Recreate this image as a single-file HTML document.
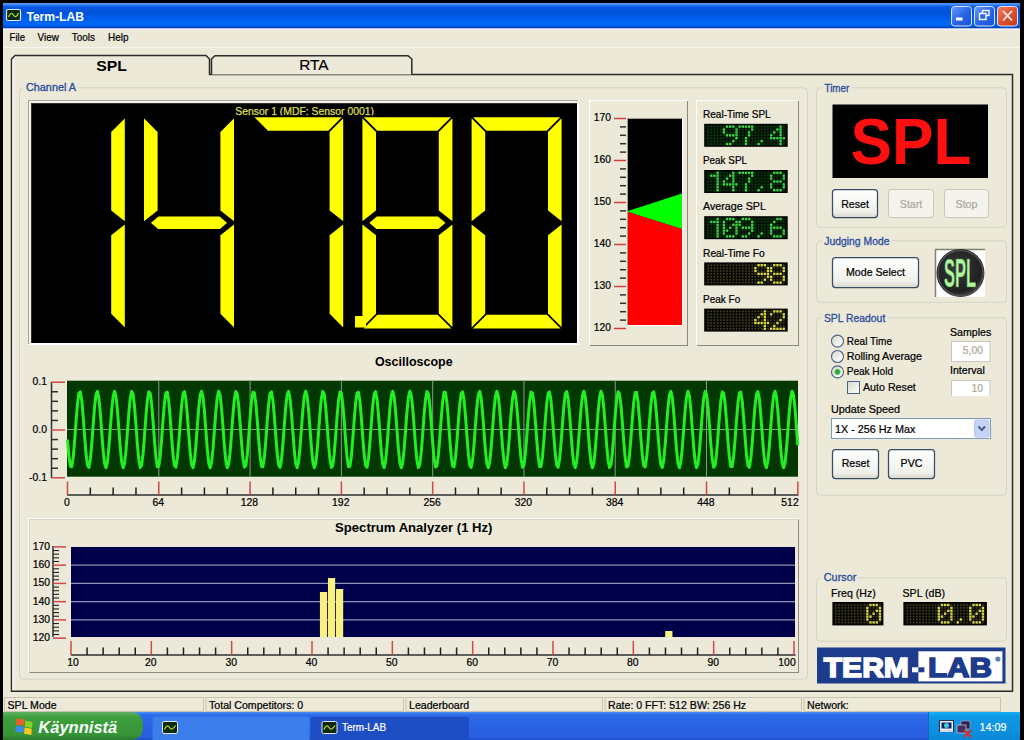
<!DOCTYPE html>
<html><head><meta charset="utf-8"><style>
html,body{margin:0;padding:0;background:#000;width:1024px;height:740px;overflow:hidden}
svg{display:block;font-family:"Liberation Sans", sans-serif}
</style></head><body>
<svg width="1024" height="740" viewBox="0 0 1024 740">
<rect x="0" y="0" width="1024" height="740" fill="#000" />
<rect x="3" y="28" width="1017" height="684" fill="#ECE9D8" />
<defs>
<linearGradient id="tb" x1="0" y1="0" x2="0" y2="1">
<stop offset="0" stop-color="#5A9CF6"/><stop offset="0.07" stop-color="#3A84F2"/><stop offset="0.14" stop-color="#0A5CE6"/><stop offset="0.35" stop-color="#0052DA"/><stop offset="0.6" stop-color="#005EEC"/><stop offset="0.86" stop-color="#006AF8"/><stop offset="0.93" stop-color="#0050D0"/><stop offset="1" stop-color="#0038A8"/></linearGradient>
<linearGradient id="task" x1="0" y1="0" x2="0" y2="1">
<stop offset="0" stop-color="#4A90F8"/><stop offset="0.1" stop-color="#2E6CE8"/><stop offset="0.5" stop-color="#2A62E4"/><stop offset="0.9" stop-color="#2860E0"/><stop offset="1" stop-color="#1C50C8"/></linearGradient>
<linearGradient id="start" x1="0" y1="0" x2="0" y2="1">
<stop offset="0" stop-color="#60B060"/><stop offset="0.2" stop-color="#3C9E3C"/><stop offset="0.8" stop-color="#379437"/><stop offset="1" stop-color="#2C7A2C"/></linearGradient>
<linearGradient id="tray" x1="0" y1="0" x2="0" y2="1">
<stop offset="0" stop-color="#18B0F8"/><stop offset="0.15" stop-color="#0E9AE8"/><stop offset="1" stop-color="#0A88D8"/></linearGradient>
<linearGradient id="btn" x1="0" y1="0" x2="0" y2="1">
<stop offset="0" stop-color="#FFFFFF"/><stop offset="0.8" stop-color="#F0F0EA"/><stop offset="1" stop-color="#D8D5C8"/></linearGradient>
<linearGradient id="wbtn" x1="0" y1="0" x2="1" y2="1">
<stop offset="0" stop-color="#6A9CF8"/><stop offset="0.5" stop-color="#2A66E8"/><stop offset="1" stop-color="#1A50D0"/></linearGradient>
<linearGradient id="xbtn" x1="0" y1="0" x2="1" y2="1">
<stop offset="0" stop-color="#F08060"/><stop offset="0.5" stop-color="#E05030"/><stop offset="1" stop-color="#C03818"/></linearGradient>
<radialGradient id="logo" cx="0.45" cy="0.4" r="0.6">
<stop offset="0" stop-color="#3A3A3A"/><stop offset="0.8" stop-color="#202020"/><stop offset="1" stop-color="#404040"/></radialGradient>
<linearGradient id="radio" x1="0" y1="0" x2="1" y2="1">
<stop offset="0" stop-color="#D8D8D0"/><stop offset="1" stop-color="#FFFFFF"/></linearGradient>
</defs>
<rect x="3" y="3" width="1017" height="25.5" fill="url(#tb)" />
<rect x="3" y="28.5" width="1017" height="1.5" fill="#F2F2FC" />
<rect x="6.5" y="9.5" width="14" height="11" fill="#102810" stroke="#E0E8F0" stroke-width="1.2" rx="1.5"/>
<path d="M8.5 17 Q11 11 13.5 15 Q16 19 18.5 13" fill="none" stroke="#B0E040" stroke-width="1.3"/>
<text x="26.4" y="21" font-size="13" fill="#FFFFFF" font-weight="bold" text-anchor="start" textLength="57.6" lengthAdjust="spacingAndGlyphs" >Term-LAB</text>
<rect x="951.5" y="6.5" width="20" height="19.5" rx="3" fill="url(#wbtn)" stroke="#D8E4FA" stroke-width="1"/>
<rect x="956" y="17.5" width="6.5" height="3" fill="#FFFFFF" />
<rect x="974.5" y="6.5" width="20" height="19.5" rx="3" fill="url(#wbtn)" stroke="#D8E4FA" stroke-width="1"/>
<rect x="982.5" y="10.5" width="6.5" height="5" fill="none" stroke="#fff" stroke-width="1.4"/>
<rect x="979.5" y="13.5" width="6.5" height="6" fill="#2A66E8" stroke="#fff" stroke-width="1.4"/>
<rect x="997.5" y="6.5" width="20" height="19.5" rx="3" fill="url(#xbtn)" stroke="#D8E4FA" stroke-width="1"/>
<path d="M1003 11 L1012 20.5 M1012 11 L1003 20.5" stroke="#FFF4F0" stroke-width="1.8"/>
<text x="9.6" y="41.4" font-size="10.8" fill="#000" font-weight="normal" text-anchor="start" textLength="15.4" lengthAdjust="spacingAndGlyphs" stroke="#000" stroke-width="0.22">File</text>
<text x="37.6" y="41.4" font-size="10.8" fill="#000" font-weight="normal" text-anchor="start" textLength="21.2" lengthAdjust="spacingAndGlyphs" stroke="#000" stroke-width="0.22">View</text>
<text x="71.8" y="41.4" font-size="10.8" fill="#000" font-weight="normal" text-anchor="start" textLength="23.2" lengthAdjust="spacingAndGlyphs" stroke="#000" stroke-width="0.22">Tools</text>
<text x="108" y="41.4" font-size="10.8" fill="#000" font-weight="normal" text-anchor="start" textLength="20.5" lengthAdjust="spacingAndGlyphs" stroke="#000" stroke-width="0.22">Help</text>
<line x1="3" y1="47.5" x2="1020" y2="47.5" stroke="#F6F4EC" stroke-width="1" />
<path d="M11.5 691.3 L11.5 59 L15 55.5 L206 55.5 L209.5 59 L209.5 74.5 L1012.5 74.5 L1012.5 691.3 Z" fill="#ECE9D8" stroke="#2A2A2A" stroke-width="1.5"/>
<path d="M13 690 L13 60 L16 57" fill="none" stroke="#FFFFFF" stroke-width="1"/>
<path d="M211.5 74.5 L211.5 59 L215 55.8 L408 55.8 L411.8 59 L411.8 74.5" fill="#ECE9D8" stroke="#2A2A2A" stroke-width="1.5"/>
<text x="96.3" y="70.8" font-size="15.5" fill="#000" font-weight="bold" text-anchor="start" textLength="30.7" lengthAdjust="spacingAndGlyphs" >SPL</text>
<text x="299.3" y="70.4" font-size="15.2" fill="#000" font-weight="normal" text-anchor="start" textLength="29.3" lengthAdjust="spacingAndGlyphs" stroke="#000" stroke-width="0.22">RTA</text>
<rect x="19.5" y="87.8" width="788" height="591.5" rx="4" fill="none" stroke="#D6D4C4" stroke-width="1"/>
<rect x="24" y="84" width="54" height="9" fill="#ECE9D8" />
<text x="26" y="91" font-size="10.4" fill="#2C4C9C" font-weight="normal" text-anchor="start" textLength="50" lengthAdjust="spacingAndGlyphs" stroke="#2C4C9C" stroke-width="0.3">Channel A</text>
<rect x="816.5" y="87.8" width="190" height="139.5" rx="4" fill="none" stroke="#D6D4C4" stroke-width="1"/>
<rect x="822.5" y="84" width="28.8" height="9" fill="#ECE9D8" />
<text x="824.5" y="91.5" font-size="10.4" fill="#2C4C9C" font-weight="normal" text-anchor="start" textLength="24.8" lengthAdjust="spacingAndGlyphs" stroke="#2C4C9C" stroke-width="0.3">Timer</text>
<rect x="816.5" y="240.8" width="190" height="61.5" rx="4" fill="none" stroke="#D6D4C4" stroke-width="1"/>
<rect x="822.2" y="237" width="69.3" height="9" fill="#ECE9D8" />
<text x="824.2" y="245.3" font-size="10.4" fill="#2C4C9C" font-weight="normal" text-anchor="start" textLength="65.3" lengthAdjust="spacingAndGlyphs" stroke="#2C4C9C" stroke-width="0.3">Judging Mode</text>
<rect x="816.5" y="317.8" width="190" height="177.5" rx="4" fill="none" stroke="#D6D4C4" stroke-width="1"/>
<rect x="821.9" y="314" width="65.4" height="9" fill="#ECE9D8" />
<text x="823.9" y="321.6" font-size="10.4" fill="#2C4C9C" font-weight="normal" text-anchor="start" textLength="61.4" lengthAdjust="spacingAndGlyphs" stroke="#2C4C9C" stroke-width="0.3">SPL Readout</text>
<rect x="816.5" y="577.8" width="190" height="63.5" rx="4" fill="none" stroke="#D6D4C4" stroke-width="1"/>
<rect x="821.8" y="574" width="36.5" height="9" fill="#ECE9D8" />
<text x="823.8" y="581.4" font-size="10.4" fill="#2C4C9C" font-weight="normal" text-anchor="start" textLength="32.5" lengthAdjust="spacingAndGlyphs" stroke="#2C4C9C" stroke-width="0.3">Cursor</text>
<rect x="28" y="100" width="551" height="245" fill="#FFFFFF" />
<rect x="28" y="100" width="550" height="244" fill="#A8A698" />
<rect x="29" y="101" width="549" height="243" fill="#F6F4EA" />
<rect x="31" y="103" width="547" height="241" fill="#FFFFFF" />
<rect x="31" y="103" width="546" height="240" fill="#303030" />
<rect x="32" y="104" width="545" height="239" fill="#000000" />
<text x="235.3" y="115.3" font-size="10.4" fill="#DCDC5A" font-weight="normal" text-anchor="start" textLength="138.7" lengthAdjust="spacingAndGlyphs" stroke="#DCDC5A" stroke-width="0.25">Sensor 1 (MDF: Sensor 0001)</text>
<polygon points="125.6,116.4 110.4,131.6 110.4,210.8 125.6,222.8" fill="#FFFF00" stroke="#000" stroke-width="1.6" stroke-linejoin="miter"/>
<polygon points="125.6,329.2 110.4,314.0 110.4,234.8 125.6,222.8" fill="#FFFF00" stroke="#000" stroke-width="1.6" stroke-linejoin="miter"/>
<polygon points="143.2,116.4 158.4,131.6 158.4,210.8 143.2,222.8" fill="#FFFF00" stroke="#000" stroke-width="1.6" stroke-linejoin="miter"/>
<polygon points="149.7,222.8 157.9,215.8 220.1,215.8 228.3,222.8 220.1,229.8 157.9,229.8" fill="#FFFF00" stroke="#000" stroke-width="1.6" stroke-linejoin="miter"/>
<polygon points="234.8,116.4 219.6,131.6 219.6,210.8 234.8,222.8" fill="#FFFF00" stroke="#000" stroke-width="1.6" stroke-linejoin="miter"/>
<polygon points="234.8,329.2 219.6,314.0 219.6,234.8 234.8,222.8" fill="#FFFF00" stroke="#000" stroke-width="1.6" stroke-linejoin="miter"/>
<polygon points="252.4,116.4 344.0,116.4 328.8,131.6 267.6,131.6" fill="#FFFF00" stroke="#000" stroke-width="1.6" stroke-linejoin="miter"/>
<polygon points="344.0,116.4 328.8,131.6 328.8,210.8 344.0,222.8" fill="#FFFF00" stroke="#000" stroke-width="1.6" stroke-linejoin="miter"/>
<polygon points="344.0,329.2 328.8,314.0 328.8,234.8 344.0,222.8" fill="#FFFF00" stroke="#000" stroke-width="1.6" stroke-linejoin="miter"/>
<polygon points="361.6,116.4 453.2,116.4 438.0,131.6 376.8,131.6" fill="#FFFF00" stroke="#000" stroke-width="1.6" stroke-linejoin="miter"/>
<polygon points="453.2,116.4 438.0,131.6 438.0,210.8 453.2,222.8" fill="#FFFF00" stroke="#000" stroke-width="1.6" stroke-linejoin="miter"/>
<polygon points="453.2,329.2 438.0,314.0 438.0,234.8 453.2,222.8" fill="#FFFF00" stroke="#000" stroke-width="1.6" stroke-linejoin="miter"/>
<polygon points="361.6,329.2 453.2,329.2 438.0,314.0 376.8,314.0" fill="#FFFF00" stroke="#000" stroke-width="1.6" stroke-linejoin="miter"/>
<polygon points="361.6,329.2 376.8,314.0 376.8,234.8 361.6,222.8" fill="#FFFF00" stroke="#000" stroke-width="1.6" stroke-linejoin="miter"/>
<polygon points="361.6,116.4 376.8,131.6 376.8,210.8 361.6,222.8" fill="#FFFF00" stroke="#000" stroke-width="1.6" stroke-linejoin="miter"/>
<polygon points="368.1,222.8 376.3,215.8 438.5,215.8 446.7,222.8 438.5,229.8 376.3,229.8" fill="#FFFF00" stroke="#000" stroke-width="1.6" stroke-linejoin="miter"/>
<polygon points="470.8,116.4 562.4,116.4 547.2,131.6 486.0,131.6" fill="#FFFF00" stroke="#000" stroke-width="1.6" stroke-linejoin="miter"/>
<polygon points="562.4,116.4 547.2,131.6 547.2,210.8 562.4,222.8" fill="#FFFF00" stroke="#000" stroke-width="1.6" stroke-linejoin="miter"/>
<polygon points="562.4,329.2 547.2,314.0 547.2,234.8 562.4,222.8" fill="#FFFF00" stroke="#000" stroke-width="1.6" stroke-linejoin="miter"/>
<polygon points="470.8,329.2 562.4,329.2 547.2,314.0 486.0,314.0" fill="#FFFF00" stroke="#000" stroke-width="1.6" stroke-linejoin="miter"/>
<polygon points="470.8,329.2 486.0,314.0 486.0,234.8 470.8,222.8" fill="#FFFF00" stroke="#000" stroke-width="1.6" stroke-linejoin="miter"/>
<polygon points="470.8,116.4 486.0,131.6 486.0,210.8 470.8,222.8" fill="#FFFF00" stroke="#000" stroke-width="1.6" stroke-linejoin="miter"/>
<rect x="355" y="316" width="11" height="11.5" fill="#FFFF00" />
<rect x="589" y="100" width="99" height="246" fill="#FFFFFF" />
<rect x="590" y="101" width="98" height="245" fill="#8C8A7C" />
<rect x="590" y="101" width="97" height="244" fill="#ECE9D8" />
<rect x="627" y="118" width="56" height="208" fill="#FFFFFF" />
<rect x="627" y="118" width="55" height="207" fill="#A0A090" />
<rect x="628" y="119" width="54" height="206" fill="#000" />
<polygon points="628,211 682,193.5 682,229 628,212" fill="#00FF00"/>
<polygon points="628,212 682,229 682,325 628,325" fill="#FF0000"/>
<line x1="614" y1="118.5" x2="626" y2="118.5" stroke="#D04040" stroke-width="1.5" />
<text x="611" y="120.5" font-size="10.3" fill="#000" font-weight="normal" text-anchor="end" stroke="#000" stroke-width="0.22">170</text>
<line x1="620" y1="126.9" x2="626" y2="126.9" stroke="#303030" stroke-width="1.5" />
<line x1="620" y1="135.3" x2="626" y2="135.3" stroke="#303030" stroke-width="1.5" />
<line x1="620" y1="143.7" x2="626" y2="143.7" stroke="#303030" stroke-width="1.5" />
<line x1="620" y1="152.1" x2="626" y2="152.1" stroke="#303030" stroke-width="1.5" />
<line x1="614" y1="160.5" x2="626" y2="160.5" stroke="#D04040" stroke-width="1.5" />
<text x="611" y="162.5" font-size="10.3" fill="#000" font-weight="normal" text-anchor="end" stroke="#000" stroke-width="0.22">160</text>
<line x1="620" y1="168.9" x2="626" y2="168.9" stroke="#303030" stroke-width="1.5" />
<line x1="620" y1="177.3" x2="626" y2="177.3" stroke="#303030" stroke-width="1.5" />
<line x1="620" y1="185.7" x2="626" y2="185.7" stroke="#303030" stroke-width="1.5" />
<line x1="620" y1="194.10000000000002" x2="626" y2="194.10000000000002" stroke="#303030" stroke-width="1.5" />
<line x1="614" y1="202.5" x2="626" y2="202.5" stroke="#D04040" stroke-width="1.5" />
<text x="611" y="204.5" font-size="10.3" fill="#000" font-weight="normal" text-anchor="end" stroke="#000" stroke-width="0.22">150</text>
<line x1="620" y1="210.9" x2="626" y2="210.9" stroke="#303030" stroke-width="1.5" />
<line x1="620" y1="219.3" x2="626" y2="219.3" stroke="#303030" stroke-width="1.5" />
<line x1="620" y1="227.7" x2="626" y2="227.7" stroke="#303030" stroke-width="1.5" />
<line x1="620" y1="236.10000000000002" x2="626" y2="236.10000000000002" stroke="#303030" stroke-width="1.5" />
<line x1="614" y1="244.5" x2="626" y2="244.5" stroke="#D04040" stroke-width="1.5" />
<text x="611" y="246.5" font-size="10.3" fill="#000" font-weight="normal" text-anchor="end" stroke="#000" stroke-width="0.22">140</text>
<line x1="620" y1="252.9" x2="626" y2="252.9" stroke="#303030" stroke-width="1.5" />
<line x1="620" y1="261.3" x2="626" y2="261.3" stroke="#303030" stroke-width="1.5" />
<line x1="620" y1="269.70000000000005" x2="626" y2="269.70000000000005" stroke="#303030" stroke-width="1.5" />
<line x1="620" y1="278.1" x2="626" y2="278.1" stroke="#303030" stroke-width="1.5" />
<line x1="614" y1="286.5" x2="626" y2="286.5" stroke="#D04040" stroke-width="1.5" />
<text x="611" y="288.5" font-size="10.3" fill="#000" font-weight="normal" text-anchor="end" stroke="#000" stroke-width="0.22">130</text>
<line x1="620" y1="294.9" x2="626" y2="294.9" stroke="#303030" stroke-width="1.5" />
<line x1="620" y1="303.3" x2="626" y2="303.3" stroke="#303030" stroke-width="1.5" />
<line x1="620" y1="311.70000000000005" x2="626" y2="311.70000000000005" stroke="#303030" stroke-width="1.5" />
<line x1="620" y1="320.1" x2="626" y2="320.1" stroke="#303030" stroke-width="1.5" />
<line x1="614" y1="328.5" x2="626" y2="328.5" stroke="#D04040" stroke-width="1.5" />
<text x="611" y="330.5" font-size="10.3" fill="#000" font-weight="normal" text-anchor="end" stroke="#000" stroke-width="0.22">120</text>
<rect x="696" y="100" width="103" height="246" fill="#FFFFFF" />
<rect x="697" y="101" width="102" height="245" fill="#8C8A7C" />
<rect x="697" y="101" width="101" height="244" fill="#ECE9D8" />
<text x="703" y="117.89999999999999" font-size="10.2" fill="#000" font-weight="normal" text-anchor="start" textLength="67.7" lengthAdjust="spacingAndGlyphs" stroke="#000" stroke-width="0.22">Real-Time SPL</text>
<rect x="704.2" y="123.8" width="83.5" height="23" fill="#000" />
<rect x="705.2" y="124.8" width="81.5" height="21" fill="#001000" />
<rect x="707.35" y="125.80" width="1.60" height="1.60" fill="#0E4214"/>
<rect x="710.50" y="125.80" width="1.60" height="1.60" fill="#0E4214"/>
<rect x="713.65" y="125.80" width="1.60" height="1.60" fill="#0E4214"/>
<rect x="716.80" y="125.80" width="1.60" height="1.60" fill="#0E4214"/>
<rect x="719.95" y="125.80" width="1.60" height="1.60" fill="#0E4214"/>
<rect x="723.10" y="125.80" width="1.60" height="1.60" fill="#0E4214"/>
<rect x="725.85" y="125.40" width="2.40" height="2.40" fill="#3CD848"/>
<rect x="729.00" y="125.40" width="2.40" height="2.40" fill="#3CD848"/>
<rect x="732.15" y="125.40" width="2.40" height="2.40" fill="#3CD848"/>
<rect x="735.70" y="125.80" width="1.60" height="1.60" fill="#0E4214"/>
<rect x="738.45" y="125.40" width="2.40" height="2.40" fill="#3CD848"/>
<rect x="741.60" y="125.40" width="2.40" height="2.40" fill="#3CD848"/>
<rect x="744.75" y="125.40" width="2.40" height="2.40" fill="#3CD848"/>
<rect x="747.90" y="125.40" width="2.40" height="2.40" fill="#3CD848"/>
<rect x="751.05" y="125.40" width="2.40" height="2.40" fill="#3CD848"/>
<rect x="754.60" y="125.80" width="1.60" height="1.60" fill="#0E4214"/>
<rect x="757.75" y="125.80" width="1.60" height="1.60" fill="#0E4214"/>
<rect x="760.90" y="125.80" width="1.60" height="1.60" fill="#0E4214"/>
<rect x="764.05" y="125.80" width="1.60" height="1.60" fill="#0E4214"/>
<rect x="767.20" y="125.80" width="1.60" height="1.60" fill="#0E4214"/>
<rect x="770.35" y="125.80" width="1.60" height="1.60" fill="#0E4214"/>
<rect x="773.50" y="125.80" width="1.60" height="1.60" fill="#0E4214"/>
<rect x="776.65" y="125.80" width="1.60" height="1.60" fill="#0E4214"/>
<rect x="779.40" y="125.40" width="2.40" height="2.40" fill="#3CD848"/>
<rect x="782.95" y="125.80" width="1.60" height="1.60" fill="#0E4214"/>
<rect x="707.35" y="128.70" width="1.60" height="1.60" fill="#0E4214"/>
<rect x="710.50" y="128.70" width="1.60" height="1.60" fill="#0E4214"/>
<rect x="713.65" y="128.70" width="1.60" height="1.60" fill="#0E4214"/>
<rect x="716.80" y="128.70" width="1.60" height="1.60" fill="#0E4214"/>
<rect x="719.95" y="128.70" width="1.60" height="1.60" fill="#0E4214"/>
<rect x="722.70" y="128.30" width="2.40" height="2.40" fill="#3CD848"/>
<rect x="726.25" y="128.70" width="1.60" height="1.60" fill="#0E4214"/>
<rect x="729.40" y="128.70" width="1.60" height="1.60" fill="#0E4214"/>
<rect x="732.55" y="128.70" width="1.60" height="1.60" fill="#0E4214"/>
<rect x="735.30" y="128.30" width="2.40" height="2.40" fill="#3CD848"/>
<rect x="738.85" y="128.70" width="1.60" height="1.60" fill="#0E4214"/>
<rect x="742.00" y="128.70" width="1.60" height="1.60" fill="#0E4214"/>
<rect x="745.15" y="128.70" width="1.60" height="1.60" fill="#0E4214"/>
<rect x="748.30" y="128.70" width="1.60" height="1.60" fill="#0E4214"/>
<rect x="751.05" y="128.30" width="2.40" height="2.40" fill="#3CD848"/>
<rect x="754.60" y="128.70" width="1.60" height="1.60" fill="#0E4214"/>
<rect x="757.75" y="128.70" width="1.60" height="1.60" fill="#0E4214"/>
<rect x="760.90" y="128.70" width="1.60" height="1.60" fill="#0E4214"/>
<rect x="764.05" y="128.70" width="1.60" height="1.60" fill="#0E4214"/>
<rect x="767.20" y="128.70" width="1.60" height="1.60" fill="#0E4214"/>
<rect x="770.35" y="128.70" width="1.60" height="1.60" fill="#0E4214"/>
<rect x="773.50" y="128.70" width="1.60" height="1.60" fill="#0E4214"/>
<rect x="776.25" y="128.30" width="2.40" height="2.40" fill="#3CD848"/>
<rect x="779.40" y="128.30" width="2.40" height="2.40" fill="#3CD848"/>
<rect x="782.95" y="128.70" width="1.60" height="1.60" fill="#0E4214"/>
<rect x="707.35" y="131.60" width="1.60" height="1.60" fill="#0E4214"/>
<rect x="710.50" y="131.60" width="1.60" height="1.60" fill="#0E4214"/>
<rect x="713.65" y="131.60" width="1.60" height="1.60" fill="#0E4214"/>
<rect x="716.80" y="131.60" width="1.60" height="1.60" fill="#0E4214"/>
<rect x="719.95" y="131.60" width="1.60" height="1.60" fill="#0E4214"/>
<rect x="722.70" y="131.20" width="2.40" height="2.40" fill="#3CD848"/>
<rect x="726.25" y="131.60" width="1.60" height="1.60" fill="#0E4214"/>
<rect x="729.40" y="131.60" width="1.60" height="1.60" fill="#0E4214"/>
<rect x="732.55" y="131.60" width="1.60" height="1.60" fill="#0E4214"/>
<rect x="735.30" y="131.20" width="2.40" height="2.40" fill="#3CD848"/>
<rect x="738.85" y="131.60" width="1.60" height="1.60" fill="#0E4214"/>
<rect x="742.00" y="131.60" width="1.60" height="1.60" fill="#0E4214"/>
<rect x="745.15" y="131.60" width="1.60" height="1.60" fill="#0E4214"/>
<rect x="747.90" y="131.20" width="2.40" height="2.40" fill="#3CD848"/>
<rect x="751.45" y="131.60" width="1.60" height="1.60" fill="#0E4214"/>
<rect x="754.60" y="131.60" width="1.60" height="1.60" fill="#0E4214"/>
<rect x="757.75" y="131.60" width="1.60" height="1.60" fill="#0E4214"/>
<rect x="760.90" y="131.60" width="1.60" height="1.60" fill="#0E4214"/>
<rect x="764.05" y="131.60" width="1.60" height="1.60" fill="#0E4214"/>
<rect x="767.20" y="131.60" width="1.60" height="1.60" fill="#0E4214"/>
<rect x="770.35" y="131.60" width="1.60" height="1.60" fill="#0E4214"/>
<rect x="773.10" y="131.20" width="2.40" height="2.40" fill="#3CD848"/>
<rect x="776.65" y="131.60" width="1.60" height="1.60" fill="#0E4214"/>
<rect x="779.40" y="131.20" width="2.40" height="2.40" fill="#3CD848"/>
<rect x="782.95" y="131.60" width="1.60" height="1.60" fill="#0E4214"/>
<rect x="707.35" y="134.50" width="1.60" height="1.60" fill="#0E4214"/>
<rect x="710.50" y="134.50" width="1.60" height="1.60" fill="#0E4214"/>
<rect x="713.65" y="134.50" width="1.60" height="1.60" fill="#0E4214"/>
<rect x="716.80" y="134.50" width="1.60" height="1.60" fill="#0E4214"/>
<rect x="719.95" y="134.50" width="1.60" height="1.60" fill="#0E4214"/>
<rect x="723.10" y="134.50" width="1.60" height="1.60" fill="#0E4214"/>
<rect x="725.85" y="134.10" width="2.40" height="2.40" fill="#3CD848"/>
<rect x="729.00" y="134.10" width="2.40" height="2.40" fill="#3CD848"/>
<rect x="732.15" y="134.10" width="2.40" height="2.40" fill="#3CD848"/>
<rect x="735.30" y="134.10" width="2.40" height="2.40" fill="#3CD848"/>
<rect x="738.85" y="134.50" width="1.60" height="1.60" fill="#0E4214"/>
<rect x="742.00" y="134.50" width="1.60" height="1.60" fill="#0E4214"/>
<rect x="745.15" y="134.50" width="1.60" height="1.60" fill="#0E4214"/>
<rect x="747.90" y="134.10" width="2.40" height="2.40" fill="#3CD848"/>
<rect x="751.45" y="134.50" width="1.60" height="1.60" fill="#0E4214"/>
<rect x="754.60" y="134.50" width="1.60" height="1.60" fill="#0E4214"/>
<rect x="757.75" y="134.50" width="1.60" height="1.60" fill="#0E4214"/>
<rect x="760.90" y="134.50" width="1.60" height="1.60" fill="#0E4214"/>
<rect x="764.05" y="134.50" width="1.60" height="1.60" fill="#0E4214"/>
<rect x="767.20" y="134.50" width="1.60" height="1.60" fill="#0E4214"/>
<rect x="769.95" y="134.10" width="2.40" height="2.40" fill="#3CD848"/>
<rect x="773.50" y="134.50" width="1.60" height="1.60" fill="#0E4214"/>
<rect x="776.65" y="134.50" width="1.60" height="1.60" fill="#0E4214"/>
<rect x="779.40" y="134.10" width="2.40" height="2.40" fill="#3CD848"/>
<rect x="782.95" y="134.50" width="1.60" height="1.60" fill="#0E4214"/>
<rect x="707.35" y="137.40" width="1.60" height="1.60" fill="#0E4214"/>
<rect x="710.50" y="137.40" width="1.60" height="1.60" fill="#0E4214"/>
<rect x="713.65" y="137.40" width="1.60" height="1.60" fill="#0E4214"/>
<rect x="716.80" y="137.40" width="1.60" height="1.60" fill="#0E4214"/>
<rect x="719.95" y="137.40" width="1.60" height="1.60" fill="#0E4214"/>
<rect x="723.10" y="137.40" width="1.60" height="1.60" fill="#0E4214"/>
<rect x="726.25" y="137.40" width="1.60" height="1.60" fill="#0E4214"/>
<rect x="729.40" y="137.40" width="1.60" height="1.60" fill="#0E4214"/>
<rect x="732.55" y="137.40" width="1.60" height="1.60" fill="#0E4214"/>
<rect x="735.30" y="137.00" width="2.40" height="2.40" fill="#3CD848"/>
<rect x="738.85" y="137.40" width="1.60" height="1.60" fill="#0E4214"/>
<rect x="742.00" y="137.40" width="1.60" height="1.60" fill="#0E4214"/>
<rect x="744.75" y="137.00" width="2.40" height="2.40" fill="#3CD848"/>
<rect x="748.30" y="137.40" width="1.60" height="1.60" fill="#0E4214"/>
<rect x="751.45" y="137.40" width="1.60" height="1.60" fill="#0E4214"/>
<rect x="754.60" y="137.40" width="1.60" height="1.60" fill="#0E4214"/>
<rect x="757.75" y="137.40" width="1.60" height="1.60" fill="#0E4214"/>
<rect x="760.90" y="137.40" width="1.60" height="1.60" fill="#0E4214"/>
<rect x="764.05" y="137.40" width="1.60" height="1.60" fill="#0E4214"/>
<rect x="767.20" y="137.40" width="1.60" height="1.60" fill="#0E4214"/>
<rect x="769.95" y="137.00" width="2.40" height="2.40" fill="#3CD848"/>
<rect x="773.10" y="137.00" width="2.40" height="2.40" fill="#3CD848"/>
<rect x="776.25" y="137.00" width="2.40" height="2.40" fill="#3CD848"/>
<rect x="779.40" y="137.00" width="2.40" height="2.40" fill="#3CD848"/>
<rect x="782.55" y="137.00" width="2.40" height="2.40" fill="#3CD848"/>
<rect x="707.35" y="140.30" width="1.60" height="1.60" fill="#0E4214"/>
<rect x="710.50" y="140.30" width="1.60" height="1.60" fill="#0E4214"/>
<rect x="713.65" y="140.30" width="1.60" height="1.60" fill="#0E4214"/>
<rect x="716.80" y="140.30" width="1.60" height="1.60" fill="#0E4214"/>
<rect x="719.95" y="140.30" width="1.60" height="1.60" fill="#0E4214"/>
<rect x="723.10" y="140.30" width="1.60" height="1.60" fill="#0E4214"/>
<rect x="726.25" y="140.30" width="1.60" height="1.60" fill="#0E4214"/>
<rect x="729.40" y="140.30" width="1.60" height="1.60" fill="#0E4214"/>
<rect x="732.15" y="139.90" width="2.40" height="2.40" fill="#3CD848"/>
<rect x="735.70" y="140.30" width="1.60" height="1.60" fill="#0E4214"/>
<rect x="738.85" y="140.30" width="1.60" height="1.60" fill="#0E4214"/>
<rect x="742.00" y="140.30" width="1.60" height="1.60" fill="#0E4214"/>
<rect x="744.75" y="139.90" width="2.40" height="2.40" fill="#3CD848"/>
<rect x="748.30" y="140.30" width="1.60" height="1.60" fill="#0E4214"/>
<rect x="751.45" y="140.30" width="1.60" height="1.60" fill="#0E4214"/>
<rect x="754.60" y="140.30" width="1.60" height="1.60" fill="#0E4214"/>
<rect x="757.75" y="140.30" width="1.60" height="1.60" fill="#0E4214"/>
<rect x="760.50" y="139.90" width="2.40" height="2.40" fill="#3CD848"/>
<rect x="764.05" y="140.30" width="1.60" height="1.60" fill="#0E4214"/>
<rect x="767.20" y="140.30" width="1.60" height="1.60" fill="#0E4214"/>
<rect x="770.35" y="140.30" width="1.60" height="1.60" fill="#0E4214"/>
<rect x="773.50" y="140.30" width="1.60" height="1.60" fill="#0E4214"/>
<rect x="776.65" y="140.30" width="1.60" height="1.60" fill="#0E4214"/>
<rect x="779.40" y="139.90" width="2.40" height="2.40" fill="#3CD848"/>
<rect x="782.95" y="140.30" width="1.60" height="1.60" fill="#0E4214"/>
<rect x="707.35" y="143.20" width="1.60" height="1.60" fill="#0E4214"/>
<rect x="710.50" y="143.20" width="1.60" height="1.60" fill="#0E4214"/>
<rect x="713.65" y="143.20" width="1.60" height="1.60" fill="#0E4214"/>
<rect x="716.80" y="143.20" width="1.60" height="1.60" fill="#0E4214"/>
<rect x="719.95" y="143.20" width="1.60" height="1.60" fill="#0E4214"/>
<rect x="723.10" y="143.20" width="1.60" height="1.60" fill="#0E4214"/>
<rect x="725.85" y="142.80" width="2.40" height="2.40" fill="#3CD848"/>
<rect x="729.00" y="142.80" width="2.40" height="2.40" fill="#3CD848"/>
<rect x="732.55" y="143.20" width="1.60" height="1.60" fill="#0E4214"/>
<rect x="735.70" y="143.20" width="1.60" height="1.60" fill="#0E4214"/>
<rect x="738.85" y="143.20" width="1.60" height="1.60" fill="#0E4214"/>
<rect x="742.00" y="143.20" width="1.60" height="1.60" fill="#0E4214"/>
<rect x="744.75" y="142.80" width="2.40" height="2.40" fill="#3CD848"/>
<rect x="748.30" y="143.20" width="1.60" height="1.60" fill="#0E4214"/>
<rect x="751.45" y="143.20" width="1.60" height="1.60" fill="#0E4214"/>
<rect x="754.60" y="143.20" width="1.60" height="1.60" fill="#0E4214"/>
<rect x="757.35" y="142.80" width="2.40" height="2.40" fill="#3CD848"/>
<rect x="760.90" y="143.20" width="1.60" height="1.60" fill="#0E4214"/>
<rect x="764.05" y="143.20" width="1.60" height="1.60" fill="#0E4214"/>
<rect x="767.20" y="143.20" width="1.60" height="1.60" fill="#0E4214"/>
<rect x="770.35" y="143.20" width="1.60" height="1.60" fill="#0E4214"/>
<rect x="773.50" y="143.20" width="1.60" height="1.60" fill="#0E4214"/>
<rect x="776.65" y="143.20" width="1.60" height="1.60" fill="#0E4214"/>
<rect x="779.40" y="142.80" width="2.40" height="2.40" fill="#3CD848"/>
<rect x="782.95" y="143.20" width="1.60" height="1.60" fill="#0E4214"/>
<text x="703" y="164.1" font-size="10.2" fill="#000" font-weight="normal" text-anchor="start" textLength="44" lengthAdjust="spacingAndGlyphs" stroke="#000" stroke-width="0.22">Peak SPL</text>
<rect x="704.2" y="170.0" width="83.5" height="23" fill="#000" />
<rect x="705.2" y="171.0" width="81.5" height="21" fill="#001000" />
<rect x="707.35" y="172.00" width="1.60" height="1.60" fill="#0E4214"/>
<rect x="710.50" y="172.00" width="1.60" height="1.60" fill="#0E4214"/>
<rect x="713.65" y="172.00" width="1.60" height="1.60" fill="#0E4214"/>
<rect x="716.40" y="171.60" width="2.40" height="2.40" fill="#3CD848"/>
<rect x="719.95" y="172.00" width="1.60" height="1.60" fill="#0E4214"/>
<rect x="723.10" y="172.00" width="1.60" height="1.60" fill="#0E4214"/>
<rect x="726.25" y="172.00" width="1.60" height="1.60" fill="#0E4214"/>
<rect x="729.40" y="172.00" width="1.60" height="1.60" fill="#0E4214"/>
<rect x="732.15" y="171.60" width="2.40" height="2.40" fill="#3CD848"/>
<rect x="735.70" y="172.00" width="1.60" height="1.60" fill="#0E4214"/>
<rect x="738.45" y="171.60" width="2.40" height="2.40" fill="#3CD848"/>
<rect x="741.60" y="171.60" width="2.40" height="2.40" fill="#3CD848"/>
<rect x="744.75" y="171.60" width="2.40" height="2.40" fill="#3CD848"/>
<rect x="747.90" y="171.60" width="2.40" height="2.40" fill="#3CD848"/>
<rect x="751.05" y="171.60" width="2.40" height="2.40" fill="#3CD848"/>
<rect x="754.60" y="172.00" width="1.60" height="1.60" fill="#0E4214"/>
<rect x="757.75" y="172.00" width="1.60" height="1.60" fill="#0E4214"/>
<rect x="760.90" y="172.00" width="1.60" height="1.60" fill="#0E4214"/>
<rect x="764.05" y="172.00" width="1.60" height="1.60" fill="#0E4214"/>
<rect x="767.20" y="172.00" width="1.60" height="1.60" fill="#0E4214"/>
<rect x="770.35" y="172.00" width="1.60" height="1.60" fill="#0E4214"/>
<rect x="773.10" y="171.60" width="2.40" height="2.40" fill="#3CD848"/>
<rect x="776.25" y="171.60" width="2.40" height="2.40" fill="#3CD848"/>
<rect x="779.40" y="171.60" width="2.40" height="2.40" fill="#3CD848"/>
<rect x="782.95" y="172.00" width="1.60" height="1.60" fill="#0E4214"/>
<rect x="707.35" y="174.90" width="1.60" height="1.60" fill="#0E4214"/>
<rect x="710.10" y="174.50" width="2.40" height="2.40" fill="#3CD848"/>
<rect x="713.25" y="174.50" width="2.40" height="2.40" fill="#3CD848"/>
<rect x="716.40" y="174.50" width="2.40" height="2.40" fill="#3CD848"/>
<rect x="719.95" y="174.90" width="1.60" height="1.60" fill="#0E4214"/>
<rect x="723.10" y="174.90" width="1.60" height="1.60" fill="#0E4214"/>
<rect x="726.25" y="174.90" width="1.60" height="1.60" fill="#0E4214"/>
<rect x="729.00" y="174.50" width="2.40" height="2.40" fill="#3CD848"/>
<rect x="732.15" y="174.50" width="2.40" height="2.40" fill="#3CD848"/>
<rect x="735.70" y="174.90" width="1.60" height="1.60" fill="#0E4214"/>
<rect x="738.85" y="174.90" width="1.60" height="1.60" fill="#0E4214"/>
<rect x="742.00" y="174.90" width="1.60" height="1.60" fill="#0E4214"/>
<rect x="745.15" y="174.90" width="1.60" height="1.60" fill="#0E4214"/>
<rect x="748.30" y="174.90" width="1.60" height="1.60" fill="#0E4214"/>
<rect x="751.05" y="174.50" width="2.40" height="2.40" fill="#3CD848"/>
<rect x="754.60" y="174.90" width="1.60" height="1.60" fill="#0E4214"/>
<rect x="757.75" y="174.90" width="1.60" height="1.60" fill="#0E4214"/>
<rect x="760.90" y="174.90" width="1.60" height="1.60" fill="#0E4214"/>
<rect x="764.05" y="174.90" width="1.60" height="1.60" fill="#0E4214"/>
<rect x="767.20" y="174.90" width="1.60" height="1.60" fill="#0E4214"/>
<rect x="769.95" y="174.50" width="2.40" height="2.40" fill="#3CD848"/>
<rect x="773.50" y="174.90" width="1.60" height="1.60" fill="#0E4214"/>
<rect x="776.65" y="174.90" width="1.60" height="1.60" fill="#0E4214"/>
<rect x="779.80" y="174.90" width="1.60" height="1.60" fill="#0E4214"/>
<rect x="782.55" y="174.50" width="2.40" height="2.40" fill="#3CD848"/>
<rect x="707.35" y="177.80" width="1.60" height="1.60" fill="#0E4214"/>
<rect x="710.50" y="177.80" width="1.60" height="1.60" fill="#0E4214"/>
<rect x="713.65" y="177.80" width="1.60" height="1.60" fill="#0E4214"/>
<rect x="716.40" y="177.40" width="2.40" height="2.40" fill="#3CD848"/>
<rect x="719.95" y="177.80" width="1.60" height="1.60" fill="#0E4214"/>
<rect x="723.10" y="177.80" width="1.60" height="1.60" fill="#0E4214"/>
<rect x="725.85" y="177.40" width="2.40" height="2.40" fill="#3CD848"/>
<rect x="729.40" y="177.80" width="1.60" height="1.60" fill="#0E4214"/>
<rect x="732.15" y="177.40" width="2.40" height="2.40" fill="#3CD848"/>
<rect x="735.70" y="177.80" width="1.60" height="1.60" fill="#0E4214"/>
<rect x="738.85" y="177.80" width="1.60" height="1.60" fill="#0E4214"/>
<rect x="742.00" y="177.80" width="1.60" height="1.60" fill="#0E4214"/>
<rect x="745.15" y="177.80" width="1.60" height="1.60" fill="#0E4214"/>
<rect x="747.90" y="177.40" width="2.40" height="2.40" fill="#3CD848"/>
<rect x="751.45" y="177.80" width="1.60" height="1.60" fill="#0E4214"/>
<rect x="754.60" y="177.80" width="1.60" height="1.60" fill="#0E4214"/>
<rect x="757.75" y="177.80" width="1.60" height="1.60" fill="#0E4214"/>
<rect x="760.90" y="177.80" width="1.60" height="1.60" fill="#0E4214"/>
<rect x="764.05" y="177.80" width="1.60" height="1.60" fill="#0E4214"/>
<rect x="767.20" y="177.80" width="1.60" height="1.60" fill="#0E4214"/>
<rect x="769.95" y="177.40" width="2.40" height="2.40" fill="#3CD848"/>
<rect x="773.50" y="177.80" width="1.60" height="1.60" fill="#0E4214"/>
<rect x="776.65" y="177.80" width="1.60" height="1.60" fill="#0E4214"/>
<rect x="779.80" y="177.80" width="1.60" height="1.60" fill="#0E4214"/>
<rect x="782.55" y="177.40" width="2.40" height="2.40" fill="#3CD848"/>
<rect x="707.35" y="180.70" width="1.60" height="1.60" fill="#0E4214"/>
<rect x="710.50" y="180.70" width="1.60" height="1.60" fill="#0E4214"/>
<rect x="713.65" y="180.70" width="1.60" height="1.60" fill="#0E4214"/>
<rect x="716.40" y="180.30" width="2.40" height="2.40" fill="#3CD848"/>
<rect x="719.95" y="180.70" width="1.60" height="1.60" fill="#0E4214"/>
<rect x="722.70" y="180.30" width="2.40" height="2.40" fill="#3CD848"/>
<rect x="726.25" y="180.70" width="1.60" height="1.60" fill="#0E4214"/>
<rect x="729.40" y="180.70" width="1.60" height="1.60" fill="#0E4214"/>
<rect x="732.15" y="180.30" width="2.40" height="2.40" fill="#3CD848"/>
<rect x="735.70" y="180.70" width="1.60" height="1.60" fill="#0E4214"/>
<rect x="738.85" y="180.70" width="1.60" height="1.60" fill="#0E4214"/>
<rect x="742.00" y="180.70" width="1.60" height="1.60" fill="#0E4214"/>
<rect x="745.15" y="180.70" width="1.60" height="1.60" fill="#0E4214"/>
<rect x="747.90" y="180.30" width="2.40" height="2.40" fill="#3CD848"/>
<rect x="751.45" y="180.70" width="1.60" height="1.60" fill="#0E4214"/>
<rect x="754.60" y="180.70" width="1.60" height="1.60" fill="#0E4214"/>
<rect x="757.75" y="180.70" width="1.60" height="1.60" fill="#0E4214"/>
<rect x="760.90" y="180.70" width="1.60" height="1.60" fill="#0E4214"/>
<rect x="764.05" y="180.70" width="1.60" height="1.60" fill="#0E4214"/>
<rect x="767.20" y="180.70" width="1.60" height="1.60" fill="#0E4214"/>
<rect x="770.35" y="180.70" width="1.60" height="1.60" fill="#0E4214"/>
<rect x="773.10" y="180.30" width="2.40" height="2.40" fill="#3CD848"/>
<rect x="776.25" y="180.30" width="2.40" height="2.40" fill="#3CD848"/>
<rect x="779.40" y="180.30" width="2.40" height="2.40" fill="#3CD848"/>
<rect x="782.95" y="180.70" width="1.60" height="1.60" fill="#0E4214"/>
<rect x="707.35" y="183.60" width="1.60" height="1.60" fill="#0E4214"/>
<rect x="710.50" y="183.60" width="1.60" height="1.60" fill="#0E4214"/>
<rect x="713.65" y="183.60" width="1.60" height="1.60" fill="#0E4214"/>
<rect x="716.40" y="183.20" width="2.40" height="2.40" fill="#3CD848"/>
<rect x="719.95" y="183.60" width="1.60" height="1.60" fill="#0E4214"/>
<rect x="722.70" y="183.20" width="2.40" height="2.40" fill="#3CD848"/>
<rect x="725.85" y="183.20" width="2.40" height="2.40" fill="#3CD848"/>
<rect x="729.00" y="183.20" width="2.40" height="2.40" fill="#3CD848"/>
<rect x="732.15" y="183.20" width="2.40" height="2.40" fill="#3CD848"/>
<rect x="735.30" y="183.20" width="2.40" height="2.40" fill="#3CD848"/>
<rect x="738.85" y="183.60" width="1.60" height="1.60" fill="#0E4214"/>
<rect x="742.00" y="183.60" width="1.60" height="1.60" fill="#0E4214"/>
<rect x="744.75" y="183.20" width="2.40" height="2.40" fill="#3CD848"/>
<rect x="748.30" y="183.60" width="1.60" height="1.60" fill="#0E4214"/>
<rect x="751.45" y="183.60" width="1.60" height="1.60" fill="#0E4214"/>
<rect x="754.60" y="183.60" width="1.60" height="1.60" fill="#0E4214"/>
<rect x="757.75" y="183.60" width="1.60" height="1.60" fill="#0E4214"/>
<rect x="760.90" y="183.60" width="1.60" height="1.60" fill="#0E4214"/>
<rect x="764.05" y="183.60" width="1.60" height="1.60" fill="#0E4214"/>
<rect x="767.20" y="183.60" width="1.60" height="1.60" fill="#0E4214"/>
<rect x="769.95" y="183.20" width="2.40" height="2.40" fill="#3CD848"/>
<rect x="773.50" y="183.60" width="1.60" height="1.60" fill="#0E4214"/>
<rect x="776.65" y="183.60" width="1.60" height="1.60" fill="#0E4214"/>
<rect x="779.80" y="183.60" width="1.60" height="1.60" fill="#0E4214"/>
<rect x="782.55" y="183.20" width="2.40" height="2.40" fill="#3CD848"/>
<rect x="707.35" y="186.50" width="1.60" height="1.60" fill="#0E4214"/>
<rect x="710.50" y="186.50" width="1.60" height="1.60" fill="#0E4214"/>
<rect x="713.65" y="186.50" width="1.60" height="1.60" fill="#0E4214"/>
<rect x="716.40" y="186.10" width="2.40" height="2.40" fill="#3CD848"/>
<rect x="719.95" y="186.50" width="1.60" height="1.60" fill="#0E4214"/>
<rect x="723.10" y="186.50" width="1.60" height="1.60" fill="#0E4214"/>
<rect x="726.25" y="186.50" width="1.60" height="1.60" fill="#0E4214"/>
<rect x="729.40" y="186.50" width="1.60" height="1.60" fill="#0E4214"/>
<rect x="732.15" y="186.10" width="2.40" height="2.40" fill="#3CD848"/>
<rect x="735.70" y="186.50" width="1.60" height="1.60" fill="#0E4214"/>
<rect x="738.85" y="186.50" width="1.60" height="1.60" fill="#0E4214"/>
<rect x="742.00" y="186.50" width="1.60" height="1.60" fill="#0E4214"/>
<rect x="744.75" y="186.10" width="2.40" height="2.40" fill="#3CD848"/>
<rect x="748.30" y="186.50" width="1.60" height="1.60" fill="#0E4214"/>
<rect x="751.45" y="186.50" width="1.60" height="1.60" fill="#0E4214"/>
<rect x="754.60" y="186.50" width="1.60" height="1.60" fill="#0E4214"/>
<rect x="757.75" y="186.50" width="1.60" height="1.60" fill="#0E4214"/>
<rect x="760.50" y="186.10" width="2.40" height="2.40" fill="#3CD848"/>
<rect x="764.05" y="186.50" width="1.60" height="1.60" fill="#0E4214"/>
<rect x="767.20" y="186.50" width="1.60" height="1.60" fill="#0E4214"/>
<rect x="769.95" y="186.10" width="2.40" height="2.40" fill="#3CD848"/>
<rect x="773.50" y="186.50" width="1.60" height="1.60" fill="#0E4214"/>
<rect x="776.65" y="186.50" width="1.60" height="1.60" fill="#0E4214"/>
<rect x="779.80" y="186.50" width="1.60" height="1.60" fill="#0E4214"/>
<rect x="782.55" y="186.10" width="2.40" height="2.40" fill="#3CD848"/>
<rect x="707.35" y="189.40" width="1.60" height="1.60" fill="#0E4214"/>
<rect x="710.50" y="189.40" width="1.60" height="1.60" fill="#0E4214"/>
<rect x="713.65" y="189.40" width="1.60" height="1.60" fill="#0E4214"/>
<rect x="716.40" y="189.00" width="2.40" height="2.40" fill="#3CD848"/>
<rect x="719.95" y="189.40" width="1.60" height="1.60" fill="#0E4214"/>
<rect x="723.10" y="189.40" width="1.60" height="1.60" fill="#0E4214"/>
<rect x="726.25" y="189.40" width="1.60" height="1.60" fill="#0E4214"/>
<rect x="729.40" y="189.40" width="1.60" height="1.60" fill="#0E4214"/>
<rect x="732.15" y="189.00" width="2.40" height="2.40" fill="#3CD848"/>
<rect x="735.70" y="189.40" width="1.60" height="1.60" fill="#0E4214"/>
<rect x="738.85" y="189.40" width="1.60" height="1.60" fill="#0E4214"/>
<rect x="742.00" y="189.40" width="1.60" height="1.60" fill="#0E4214"/>
<rect x="744.75" y="189.00" width="2.40" height="2.40" fill="#3CD848"/>
<rect x="748.30" y="189.40" width="1.60" height="1.60" fill="#0E4214"/>
<rect x="751.45" y="189.40" width="1.60" height="1.60" fill="#0E4214"/>
<rect x="754.60" y="189.40" width="1.60" height="1.60" fill="#0E4214"/>
<rect x="757.35" y="189.00" width="2.40" height="2.40" fill="#3CD848"/>
<rect x="760.90" y="189.40" width="1.60" height="1.60" fill="#0E4214"/>
<rect x="764.05" y="189.40" width="1.60" height="1.60" fill="#0E4214"/>
<rect x="767.20" y="189.40" width="1.60" height="1.60" fill="#0E4214"/>
<rect x="770.35" y="189.40" width="1.60" height="1.60" fill="#0E4214"/>
<rect x="773.10" y="189.00" width="2.40" height="2.40" fill="#3CD848"/>
<rect x="776.25" y="189.00" width="2.40" height="2.40" fill="#3CD848"/>
<rect x="779.40" y="189.00" width="2.40" height="2.40" fill="#3CD848"/>
<rect x="782.95" y="189.40" width="1.60" height="1.60" fill="#0E4214"/>
<text x="703" y="210.29999999999998" font-size="10.2" fill="#000" font-weight="normal" text-anchor="start" textLength="62.9" lengthAdjust="spacingAndGlyphs" stroke="#000" stroke-width="0.22">Average SPL</text>
<rect x="704.2" y="216.2" width="83.5" height="23" fill="#000" />
<rect x="705.2" y="217.2" width="81.5" height="21" fill="#001000" />
<rect x="707.35" y="218.20" width="1.60" height="1.60" fill="#0E4214"/>
<rect x="710.50" y="218.20" width="1.60" height="1.60" fill="#0E4214"/>
<rect x="713.65" y="218.20" width="1.60" height="1.60" fill="#0E4214"/>
<rect x="716.40" y="217.80" width="2.40" height="2.40" fill="#3CD848"/>
<rect x="719.95" y="218.20" width="1.60" height="1.60" fill="#0E4214"/>
<rect x="723.10" y="218.20" width="1.60" height="1.60" fill="#0E4214"/>
<rect x="725.85" y="217.80" width="2.40" height="2.40" fill="#3CD848"/>
<rect x="729.00" y="217.80" width="2.40" height="2.40" fill="#3CD848"/>
<rect x="732.15" y="217.80" width="2.40" height="2.40" fill="#3CD848"/>
<rect x="735.70" y="218.20" width="1.60" height="1.60" fill="#0E4214"/>
<rect x="738.85" y="218.20" width="1.60" height="1.60" fill="#0E4214"/>
<rect x="741.60" y="217.80" width="2.40" height="2.40" fill="#3CD848"/>
<rect x="744.75" y="217.80" width="2.40" height="2.40" fill="#3CD848"/>
<rect x="747.90" y="217.80" width="2.40" height="2.40" fill="#3CD848"/>
<rect x="751.45" y="218.20" width="1.60" height="1.60" fill="#0E4214"/>
<rect x="754.60" y="218.20" width="1.60" height="1.60" fill="#0E4214"/>
<rect x="757.75" y="218.20" width="1.60" height="1.60" fill="#0E4214"/>
<rect x="760.90" y="218.20" width="1.60" height="1.60" fill="#0E4214"/>
<rect x="764.05" y="218.20" width="1.60" height="1.60" fill="#0E4214"/>
<rect x="767.20" y="218.20" width="1.60" height="1.60" fill="#0E4214"/>
<rect x="770.35" y="218.20" width="1.60" height="1.60" fill="#0E4214"/>
<rect x="773.50" y="218.20" width="1.60" height="1.60" fill="#0E4214"/>
<rect x="776.25" y="217.80" width="2.40" height="2.40" fill="#3CD848"/>
<rect x="779.40" y="217.80" width="2.40" height="2.40" fill="#3CD848"/>
<rect x="782.95" y="218.20" width="1.60" height="1.60" fill="#0E4214"/>
<rect x="707.35" y="221.10" width="1.60" height="1.60" fill="#0E4214"/>
<rect x="710.10" y="220.70" width="2.40" height="2.40" fill="#3CD848"/>
<rect x="713.25" y="220.70" width="2.40" height="2.40" fill="#3CD848"/>
<rect x="716.40" y="220.70" width="2.40" height="2.40" fill="#3CD848"/>
<rect x="719.95" y="221.10" width="1.60" height="1.60" fill="#0E4214"/>
<rect x="722.70" y="220.70" width="2.40" height="2.40" fill="#3CD848"/>
<rect x="726.25" y="221.10" width="1.60" height="1.60" fill="#0E4214"/>
<rect x="729.40" y="221.10" width="1.60" height="1.60" fill="#0E4214"/>
<rect x="732.55" y="221.10" width="1.60" height="1.60" fill="#0E4214"/>
<rect x="735.30" y="220.70" width="2.40" height="2.40" fill="#3CD848"/>
<rect x="738.45" y="220.70" width="2.40" height="2.40" fill="#3CD848"/>
<rect x="742.00" y="221.10" width="1.60" height="1.60" fill="#0E4214"/>
<rect x="745.15" y="221.10" width="1.60" height="1.60" fill="#0E4214"/>
<rect x="748.30" y="221.10" width="1.60" height="1.60" fill="#0E4214"/>
<rect x="751.05" y="220.70" width="2.40" height="2.40" fill="#3CD848"/>
<rect x="754.60" y="221.10" width="1.60" height="1.60" fill="#0E4214"/>
<rect x="757.75" y="221.10" width="1.60" height="1.60" fill="#0E4214"/>
<rect x="760.90" y="221.10" width="1.60" height="1.60" fill="#0E4214"/>
<rect x="764.05" y="221.10" width="1.60" height="1.60" fill="#0E4214"/>
<rect x="767.20" y="221.10" width="1.60" height="1.60" fill="#0E4214"/>
<rect x="770.35" y="221.10" width="1.60" height="1.60" fill="#0E4214"/>
<rect x="773.10" y="220.70" width="2.40" height="2.40" fill="#3CD848"/>
<rect x="776.65" y="221.10" width="1.60" height="1.60" fill="#0E4214"/>
<rect x="779.80" y="221.10" width="1.60" height="1.60" fill="#0E4214"/>
<rect x="782.95" y="221.10" width="1.60" height="1.60" fill="#0E4214"/>
<rect x="707.35" y="224.00" width="1.60" height="1.60" fill="#0E4214"/>
<rect x="710.50" y="224.00" width="1.60" height="1.60" fill="#0E4214"/>
<rect x="713.65" y="224.00" width="1.60" height="1.60" fill="#0E4214"/>
<rect x="716.40" y="223.60" width="2.40" height="2.40" fill="#3CD848"/>
<rect x="719.95" y="224.00" width="1.60" height="1.60" fill="#0E4214"/>
<rect x="722.70" y="223.60" width="2.40" height="2.40" fill="#3CD848"/>
<rect x="726.25" y="224.00" width="1.60" height="1.60" fill="#0E4214"/>
<rect x="729.40" y="224.00" width="1.60" height="1.60" fill="#0E4214"/>
<rect x="732.15" y="223.60" width="2.40" height="2.40" fill="#3CD848"/>
<rect x="735.30" y="223.60" width="2.40" height="2.40" fill="#3CD848"/>
<rect x="738.45" y="223.60" width="2.40" height="2.40" fill="#3CD848"/>
<rect x="742.00" y="224.00" width="1.60" height="1.60" fill="#0E4214"/>
<rect x="745.15" y="224.00" width="1.60" height="1.60" fill="#0E4214"/>
<rect x="748.30" y="224.00" width="1.60" height="1.60" fill="#0E4214"/>
<rect x="751.05" y="223.60" width="2.40" height="2.40" fill="#3CD848"/>
<rect x="754.60" y="224.00" width="1.60" height="1.60" fill="#0E4214"/>
<rect x="757.75" y="224.00" width="1.60" height="1.60" fill="#0E4214"/>
<rect x="760.90" y="224.00" width="1.60" height="1.60" fill="#0E4214"/>
<rect x="764.05" y="224.00" width="1.60" height="1.60" fill="#0E4214"/>
<rect x="767.20" y="224.00" width="1.60" height="1.60" fill="#0E4214"/>
<rect x="769.95" y="223.60" width="2.40" height="2.40" fill="#3CD848"/>
<rect x="773.50" y="224.00" width="1.60" height="1.60" fill="#0E4214"/>
<rect x="776.65" y="224.00" width="1.60" height="1.60" fill="#0E4214"/>
<rect x="779.80" y="224.00" width="1.60" height="1.60" fill="#0E4214"/>
<rect x="782.95" y="224.00" width="1.60" height="1.60" fill="#0E4214"/>
<rect x="707.35" y="226.90" width="1.60" height="1.60" fill="#0E4214"/>
<rect x="710.50" y="226.90" width="1.60" height="1.60" fill="#0E4214"/>
<rect x="713.65" y="226.90" width="1.60" height="1.60" fill="#0E4214"/>
<rect x="716.40" y="226.50" width="2.40" height="2.40" fill="#3CD848"/>
<rect x="719.95" y="226.90" width="1.60" height="1.60" fill="#0E4214"/>
<rect x="722.70" y="226.50" width="2.40" height="2.40" fill="#3CD848"/>
<rect x="726.25" y="226.90" width="1.60" height="1.60" fill="#0E4214"/>
<rect x="729.00" y="226.50" width="2.40" height="2.40" fill="#3CD848"/>
<rect x="732.55" y="226.90" width="1.60" height="1.60" fill="#0E4214"/>
<rect x="735.30" y="226.50" width="2.40" height="2.40" fill="#3CD848"/>
<rect x="738.85" y="226.90" width="1.60" height="1.60" fill="#0E4214"/>
<rect x="741.60" y="226.50" width="2.40" height="2.40" fill="#3CD848"/>
<rect x="744.75" y="226.50" width="2.40" height="2.40" fill="#3CD848"/>
<rect x="747.90" y="226.50" width="2.40" height="2.40" fill="#3CD848"/>
<rect x="751.05" y="226.50" width="2.40" height="2.40" fill="#3CD848"/>
<rect x="754.60" y="226.90" width="1.60" height="1.60" fill="#0E4214"/>
<rect x="757.75" y="226.90" width="1.60" height="1.60" fill="#0E4214"/>
<rect x="760.90" y="226.90" width="1.60" height="1.60" fill="#0E4214"/>
<rect x="764.05" y="226.90" width="1.60" height="1.60" fill="#0E4214"/>
<rect x="767.20" y="226.90" width="1.60" height="1.60" fill="#0E4214"/>
<rect x="769.95" y="226.50" width="2.40" height="2.40" fill="#3CD848"/>
<rect x="773.10" y="226.50" width="2.40" height="2.40" fill="#3CD848"/>
<rect x="776.25" y="226.50" width="2.40" height="2.40" fill="#3CD848"/>
<rect x="779.40" y="226.50" width="2.40" height="2.40" fill="#3CD848"/>
<rect x="782.95" y="226.90" width="1.60" height="1.60" fill="#0E4214"/>
<rect x="707.35" y="229.80" width="1.60" height="1.60" fill="#0E4214"/>
<rect x="710.50" y="229.80" width="1.60" height="1.60" fill="#0E4214"/>
<rect x="713.65" y="229.80" width="1.60" height="1.60" fill="#0E4214"/>
<rect x="716.40" y="229.40" width="2.40" height="2.40" fill="#3CD848"/>
<rect x="719.95" y="229.80" width="1.60" height="1.60" fill="#0E4214"/>
<rect x="722.70" y="229.40" width="2.40" height="2.40" fill="#3CD848"/>
<rect x="725.85" y="229.40" width="2.40" height="2.40" fill="#3CD848"/>
<rect x="729.40" y="229.80" width="1.60" height="1.60" fill="#0E4214"/>
<rect x="732.55" y="229.80" width="1.60" height="1.60" fill="#0E4214"/>
<rect x="735.30" y="229.40" width="2.40" height="2.40" fill="#3CD848"/>
<rect x="738.85" y="229.80" width="1.60" height="1.60" fill="#0E4214"/>
<rect x="742.00" y="229.80" width="1.60" height="1.60" fill="#0E4214"/>
<rect x="745.15" y="229.80" width="1.60" height="1.60" fill="#0E4214"/>
<rect x="748.30" y="229.80" width="1.60" height="1.60" fill="#0E4214"/>
<rect x="751.05" y="229.40" width="2.40" height="2.40" fill="#3CD848"/>
<rect x="754.60" y="229.80" width="1.60" height="1.60" fill="#0E4214"/>
<rect x="757.75" y="229.80" width="1.60" height="1.60" fill="#0E4214"/>
<rect x="760.90" y="229.80" width="1.60" height="1.60" fill="#0E4214"/>
<rect x="764.05" y="229.80" width="1.60" height="1.60" fill="#0E4214"/>
<rect x="767.20" y="229.80" width="1.60" height="1.60" fill="#0E4214"/>
<rect x="769.95" y="229.40" width="2.40" height="2.40" fill="#3CD848"/>
<rect x="773.50" y="229.80" width="1.60" height="1.60" fill="#0E4214"/>
<rect x="776.65" y="229.80" width="1.60" height="1.60" fill="#0E4214"/>
<rect x="779.80" y="229.80" width="1.60" height="1.60" fill="#0E4214"/>
<rect x="782.55" y="229.40" width="2.40" height="2.40" fill="#3CD848"/>
<rect x="707.35" y="232.70" width="1.60" height="1.60" fill="#0E4214"/>
<rect x="710.50" y="232.70" width="1.60" height="1.60" fill="#0E4214"/>
<rect x="713.65" y="232.70" width="1.60" height="1.60" fill="#0E4214"/>
<rect x="716.40" y="232.30" width="2.40" height="2.40" fill="#3CD848"/>
<rect x="719.95" y="232.70" width="1.60" height="1.60" fill="#0E4214"/>
<rect x="722.70" y="232.30" width="2.40" height="2.40" fill="#3CD848"/>
<rect x="726.25" y="232.70" width="1.60" height="1.60" fill="#0E4214"/>
<rect x="729.40" y="232.70" width="1.60" height="1.60" fill="#0E4214"/>
<rect x="732.55" y="232.70" width="1.60" height="1.60" fill="#0E4214"/>
<rect x="735.30" y="232.30" width="2.40" height="2.40" fill="#3CD848"/>
<rect x="738.85" y="232.70" width="1.60" height="1.60" fill="#0E4214"/>
<rect x="742.00" y="232.70" width="1.60" height="1.60" fill="#0E4214"/>
<rect x="745.15" y="232.70" width="1.60" height="1.60" fill="#0E4214"/>
<rect x="747.90" y="232.30" width="2.40" height="2.40" fill="#3CD848"/>
<rect x="751.45" y="232.70" width="1.60" height="1.60" fill="#0E4214"/>
<rect x="754.60" y="232.70" width="1.60" height="1.60" fill="#0E4214"/>
<rect x="757.75" y="232.70" width="1.60" height="1.60" fill="#0E4214"/>
<rect x="760.50" y="232.30" width="2.40" height="2.40" fill="#3CD848"/>
<rect x="764.05" y="232.70" width="1.60" height="1.60" fill="#0E4214"/>
<rect x="767.20" y="232.70" width="1.60" height="1.60" fill="#0E4214"/>
<rect x="769.95" y="232.30" width="2.40" height="2.40" fill="#3CD848"/>
<rect x="773.50" y="232.70" width="1.60" height="1.60" fill="#0E4214"/>
<rect x="776.65" y="232.70" width="1.60" height="1.60" fill="#0E4214"/>
<rect x="779.80" y="232.70" width="1.60" height="1.60" fill="#0E4214"/>
<rect x="782.55" y="232.30" width="2.40" height="2.40" fill="#3CD848"/>
<rect x="707.35" y="235.60" width="1.60" height="1.60" fill="#0E4214"/>
<rect x="710.50" y="235.60" width="1.60" height="1.60" fill="#0E4214"/>
<rect x="713.65" y="235.60" width="1.60" height="1.60" fill="#0E4214"/>
<rect x="716.40" y="235.20" width="2.40" height="2.40" fill="#3CD848"/>
<rect x="719.95" y="235.60" width="1.60" height="1.60" fill="#0E4214"/>
<rect x="723.10" y="235.60" width="1.60" height="1.60" fill="#0E4214"/>
<rect x="725.85" y="235.20" width="2.40" height="2.40" fill="#3CD848"/>
<rect x="729.00" y="235.20" width="2.40" height="2.40" fill="#3CD848"/>
<rect x="732.15" y="235.20" width="2.40" height="2.40" fill="#3CD848"/>
<rect x="735.70" y="235.60" width="1.60" height="1.60" fill="#0E4214"/>
<rect x="738.85" y="235.60" width="1.60" height="1.60" fill="#0E4214"/>
<rect x="741.60" y="235.20" width="2.40" height="2.40" fill="#3CD848"/>
<rect x="744.75" y="235.20" width="2.40" height="2.40" fill="#3CD848"/>
<rect x="748.30" y="235.60" width="1.60" height="1.60" fill="#0E4214"/>
<rect x="751.45" y="235.60" width="1.60" height="1.60" fill="#0E4214"/>
<rect x="754.60" y="235.60" width="1.60" height="1.60" fill="#0E4214"/>
<rect x="757.35" y="235.20" width="2.40" height="2.40" fill="#3CD848"/>
<rect x="760.90" y="235.60" width="1.60" height="1.60" fill="#0E4214"/>
<rect x="764.05" y="235.60" width="1.60" height="1.60" fill="#0E4214"/>
<rect x="767.20" y="235.60" width="1.60" height="1.60" fill="#0E4214"/>
<rect x="770.35" y="235.60" width="1.60" height="1.60" fill="#0E4214"/>
<rect x="773.10" y="235.20" width="2.40" height="2.40" fill="#3CD848"/>
<rect x="776.25" y="235.20" width="2.40" height="2.40" fill="#3CD848"/>
<rect x="779.40" y="235.20" width="2.40" height="2.40" fill="#3CD848"/>
<rect x="782.95" y="235.60" width="1.60" height="1.60" fill="#0E4214"/>
<text x="703" y="256.50000000000006" font-size="10.2" fill="#000" font-weight="normal" text-anchor="start" textLength="61.6" lengthAdjust="spacingAndGlyphs" stroke="#000" stroke-width="0.22">Real-Time Fo</text>
<rect x="704.2" y="262.40000000000003" width="83.5" height="23" fill="#000" />
<rect x="705.2" y="263.40000000000003" width="81.5" height="21" fill="#080800" />
<rect x="707.35" y="264.40" width="1.60" height="1.60" fill="#42422A"/>
<rect x="710.50" y="264.40" width="1.60" height="1.60" fill="#42422A"/>
<rect x="713.65" y="264.40" width="1.60" height="1.60" fill="#42422A"/>
<rect x="716.80" y="264.40" width="1.60" height="1.60" fill="#42422A"/>
<rect x="719.95" y="264.40" width="1.60" height="1.60" fill="#42422A"/>
<rect x="723.10" y="264.40" width="1.60" height="1.60" fill="#42422A"/>
<rect x="726.25" y="264.40" width="1.60" height="1.60" fill="#42422A"/>
<rect x="729.40" y="264.40" width="1.60" height="1.60" fill="#42422A"/>
<rect x="732.55" y="264.40" width="1.60" height="1.60" fill="#42422A"/>
<rect x="735.70" y="264.40" width="1.60" height="1.60" fill="#42422A"/>
<rect x="738.85" y="264.40" width="1.60" height="1.60" fill="#42422A"/>
<rect x="742.00" y="264.40" width="1.60" height="1.60" fill="#42422A"/>
<rect x="745.15" y="264.40" width="1.60" height="1.60" fill="#42422A"/>
<rect x="748.30" y="264.40" width="1.60" height="1.60" fill="#42422A"/>
<rect x="751.45" y="264.40" width="1.60" height="1.60" fill="#42422A"/>
<rect x="754.60" y="264.40" width="1.60" height="1.60" fill="#42422A"/>
<rect x="757.35" y="264.00" width="2.40" height="2.40" fill="#D8D848"/>
<rect x="760.50" y="264.00" width="2.40" height="2.40" fill="#D8D848"/>
<rect x="763.65" y="264.00" width="2.40" height="2.40" fill="#D8D848"/>
<rect x="767.20" y="264.40" width="1.60" height="1.60" fill="#42422A"/>
<rect x="770.35" y="264.40" width="1.60" height="1.60" fill="#42422A"/>
<rect x="773.10" y="264.00" width="2.40" height="2.40" fill="#D8D848"/>
<rect x="776.25" y="264.00" width="2.40" height="2.40" fill="#D8D848"/>
<rect x="779.40" y="264.00" width="2.40" height="2.40" fill="#D8D848"/>
<rect x="782.95" y="264.40" width="1.60" height="1.60" fill="#42422A"/>
<rect x="707.35" y="267.30" width="1.60" height="1.60" fill="#42422A"/>
<rect x="710.50" y="267.30" width="1.60" height="1.60" fill="#42422A"/>
<rect x="713.65" y="267.30" width="1.60" height="1.60" fill="#42422A"/>
<rect x="716.80" y="267.30" width="1.60" height="1.60" fill="#42422A"/>
<rect x="719.95" y="267.30" width="1.60" height="1.60" fill="#42422A"/>
<rect x="723.10" y="267.30" width="1.60" height="1.60" fill="#42422A"/>
<rect x="726.25" y="267.30" width="1.60" height="1.60" fill="#42422A"/>
<rect x="729.40" y="267.30" width="1.60" height="1.60" fill="#42422A"/>
<rect x="732.55" y="267.30" width="1.60" height="1.60" fill="#42422A"/>
<rect x="735.70" y="267.30" width="1.60" height="1.60" fill="#42422A"/>
<rect x="738.85" y="267.30" width="1.60" height="1.60" fill="#42422A"/>
<rect x="742.00" y="267.30" width="1.60" height="1.60" fill="#42422A"/>
<rect x="745.15" y="267.30" width="1.60" height="1.60" fill="#42422A"/>
<rect x="748.30" y="267.30" width="1.60" height="1.60" fill="#42422A"/>
<rect x="751.45" y="267.30" width="1.60" height="1.60" fill="#42422A"/>
<rect x="754.20" y="266.90" width="2.40" height="2.40" fill="#D8D848"/>
<rect x="757.75" y="267.30" width="1.60" height="1.60" fill="#42422A"/>
<rect x="760.90" y="267.30" width="1.60" height="1.60" fill="#42422A"/>
<rect x="764.05" y="267.30" width="1.60" height="1.60" fill="#42422A"/>
<rect x="766.80" y="266.90" width="2.40" height="2.40" fill="#D8D848"/>
<rect x="769.95" y="266.90" width="2.40" height="2.40" fill="#D8D848"/>
<rect x="773.50" y="267.30" width="1.60" height="1.60" fill="#42422A"/>
<rect x="776.65" y="267.30" width="1.60" height="1.60" fill="#42422A"/>
<rect x="779.80" y="267.30" width="1.60" height="1.60" fill="#42422A"/>
<rect x="782.55" y="266.90" width="2.40" height="2.40" fill="#D8D848"/>
<rect x="707.35" y="270.20" width="1.60" height="1.60" fill="#42422A"/>
<rect x="710.50" y="270.20" width="1.60" height="1.60" fill="#42422A"/>
<rect x="713.65" y="270.20" width="1.60" height="1.60" fill="#42422A"/>
<rect x="716.80" y="270.20" width="1.60" height="1.60" fill="#42422A"/>
<rect x="719.95" y="270.20" width="1.60" height="1.60" fill="#42422A"/>
<rect x="723.10" y="270.20" width="1.60" height="1.60" fill="#42422A"/>
<rect x="726.25" y="270.20" width="1.60" height="1.60" fill="#42422A"/>
<rect x="729.40" y="270.20" width="1.60" height="1.60" fill="#42422A"/>
<rect x="732.55" y="270.20" width="1.60" height="1.60" fill="#42422A"/>
<rect x="735.70" y="270.20" width="1.60" height="1.60" fill="#42422A"/>
<rect x="738.85" y="270.20" width="1.60" height="1.60" fill="#42422A"/>
<rect x="742.00" y="270.20" width="1.60" height="1.60" fill="#42422A"/>
<rect x="745.15" y="270.20" width="1.60" height="1.60" fill="#42422A"/>
<rect x="748.30" y="270.20" width="1.60" height="1.60" fill="#42422A"/>
<rect x="751.45" y="270.20" width="1.60" height="1.60" fill="#42422A"/>
<rect x="754.20" y="269.80" width="2.40" height="2.40" fill="#D8D848"/>
<rect x="757.75" y="270.20" width="1.60" height="1.60" fill="#42422A"/>
<rect x="760.90" y="270.20" width="1.60" height="1.60" fill="#42422A"/>
<rect x="764.05" y="270.20" width="1.60" height="1.60" fill="#42422A"/>
<rect x="766.80" y="269.80" width="2.40" height="2.40" fill="#D8D848"/>
<rect x="769.95" y="269.80" width="2.40" height="2.40" fill="#D8D848"/>
<rect x="773.50" y="270.20" width="1.60" height="1.60" fill="#42422A"/>
<rect x="776.65" y="270.20" width="1.60" height="1.60" fill="#42422A"/>
<rect x="779.80" y="270.20" width="1.60" height="1.60" fill="#42422A"/>
<rect x="782.55" y="269.80" width="2.40" height="2.40" fill="#D8D848"/>
<rect x="707.35" y="273.10" width="1.60" height="1.60" fill="#42422A"/>
<rect x="710.50" y="273.10" width="1.60" height="1.60" fill="#42422A"/>
<rect x="713.65" y="273.10" width="1.60" height="1.60" fill="#42422A"/>
<rect x="716.80" y="273.10" width="1.60" height="1.60" fill="#42422A"/>
<rect x="719.95" y="273.10" width="1.60" height="1.60" fill="#42422A"/>
<rect x="723.10" y="273.10" width="1.60" height="1.60" fill="#42422A"/>
<rect x="726.25" y="273.10" width="1.60" height="1.60" fill="#42422A"/>
<rect x="729.40" y="273.10" width="1.60" height="1.60" fill="#42422A"/>
<rect x="732.55" y="273.10" width="1.60" height="1.60" fill="#42422A"/>
<rect x="735.70" y="273.10" width="1.60" height="1.60" fill="#42422A"/>
<rect x="738.85" y="273.10" width="1.60" height="1.60" fill="#42422A"/>
<rect x="742.00" y="273.10" width="1.60" height="1.60" fill="#42422A"/>
<rect x="745.15" y="273.10" width="1.60" height="1.60" fill="#42422A"/>
<rect x="748.30" y="273.10" width="1.60" height="1.60" fill="#42422A"/>
<rect x="751.45" y="273.10" width="1.60" height="1.60" fill="#42422A"/>
<rect x="754.60" y="273.10" width="1.60" height="1.60" fill="#42422A"/>
<rect x="757.35" y="272.70" width="2.40" height="2.40" fill="#D8D848"/>
<rect x="760.50" y="272.70" width="2.40" height="2.40" fill="#D8D848"/>
<rect x="763.65" y="272.70" width="2.40" height="2.40" fill="#D8D848"/>
<rect x="766.80" y="272.70" width="2.40" height="2.40" fill="#D8D848"/>
<rect x="770.35" y="273.10" width="1.60" height="1.60" fill="#42422A"/>
<rect x="773.10" y="272.70" width="2.40" height="2.40" fill="#D8D848"/>
<rect x="776.25" y="272.70" width="2.40" height="2.40" fill="#D8D848"/>
<rect x="779.40" y="272.70" width="2.40" height="2.40" fill="#D8D848"/>
<rect x="782.95" y="273.10" width="1.60" height="1.60" fill="#42422A"/>
<rect x="707.35" y="276.00" width="1.60" height="1.60" fill="#42422A"/>
<rect x="710.50" y="276.00" width="1.60" height="1.60" fill="#42422A"/>
<rect x="713.65" y="276.00" width="1.60" height="1.60" fill="#42422A"/>
<rect x="716.80" y="276.00" width="1.60" height="1.60" fill="#42422A"/>
<rect x="719.95" y="276.00" width="1.60" height="1.60" fill="#42422A"/>
<rect x="723.10" y="276.00" width="1.60" height="1.60" fill="#42422A"/>
<rect x="726.25" y="276.00" width="1.60" height="1.60" fill="#42422A"/>
<rect x="729.40" y="276.00" width="1.60" height="1.60" fill="#42422A"/>
<rect x="732.55" y="276.00" width="1.60" height="1.60" fill="#42422A"/>
<rect x="735.70" y="276.00" width="1.60" height="1.60" fill="#42422A"/>
<rect x="738.85" y="276.00" width="1.60" height="1.60" fill="#42422A"/>
<rect x="742.00" y="276.00" width="1.60" height="1.60" fill="#42422A"/>
<rect x="745.15" y="276.00" width="1.60" height="1.60" fill="#42422A"/>
<rect x="748.30" y="276.00" width="1.60" height="1.60" fill="#42422A"/>
<rect x="751.45" y="276.00" width="1.60" height="1.60" fill="#42422A"/>
<rect x="754.60" y="276.00" width="1.60" height="1.60" fill="#42422A"/>
<rect x="757.75" y="276.00" width="1.60" height="1.60" fill="#42422A"/>
<rect x="760.90" y="276.00" width="1.60" height="1.60" fill="#42422A"/>
<rect x="764.05" y="276.00" width="1.60" height="1.60" fill="#42422A"/>
<rect x="766.80" y="275.60" width="2.40" height="2.40" fill="#D8D848"/>
<rect x="769.95" y="275.60" width="2.40" height="2.40" fill="#D8D848"/>
<rect x="773.50" y="276.00" width="1.60" height="1.60" fill="#42422A"/>
<rect x="776.65" y="276.00" width="1.60" height="1.60" fill="#42422A"/>
<rect x="779.80" y="276.00" width="1.60" height="1.60" fill="#42422A"/>
<rect x="782.55" y="275.60" width="2.40" height="2.40" fill="#D8D848"/>
<rect x="707.35" y="278.90" width="1.60" height="1.60" fill="#42422A"/>
<rect x="710.50" y="278.90" width="1.60" height="1.60" fill="#42422A"/>
<rect x="713.65" y="278.90" width="1.60" height="1.60" fill="#42422A"/>
<rect x="716.80" y="278.90" width="1.60" height="1.60" fill="#42422A"/>
<rect x="719.95" y="278.90" width="1.60" height="1.60" fill="#42422A"/>
<rect x="723.10" y="278.90" width="1.60" height="1.60" fill="#42422A"/>
<rect x="726.25" y="278.90" width="1.60" height="1.60" fill="#42422A"/>
<rect x="729.40" y="278.90" width="1.60" height="1.60" fill="#42422A"/>
<rect x="732.55" y="278.90" width="1.60" height="1.60" fill="#42422A"/>
<rect x="735.70" y="278.90" width="1.60" height="1.60" fill="#42422A"/>
<rect x="738.85" y="278.90" width="1.60" height="1.60" fill="#42422A"/>
<rect x="742.00" y="278.90" width="1.60" height="1.60" fill="#42422A"/>
<rect x="745.15" y="278.90" width="1.60" height="1.60" fill="#42422A"/>
<rect x="748.30" y="278.90" width="1.60" height="1.60" fill="#42422A"/>
<rect x="751.45" y="278.90" width="1.60" height="1.60" fill="#42422A"/>
<rect x="754.60" y="278.90" width="1.60" height="1.60" fill="#42422A"/>
<rect x="757.75" y="278.90" width="1.60" height="1.60" fill="#42422A"/>
<rect x="760.90" y="278.90" width="1.60" height="1.60" fill="#42422A"/>
<rect x="763.65" y="278.50" width="2.40" height="2.40" fill="#D8D848"/>
<rect x="767.20" y="278.90" width="1.60" height="1.60" fill="#42422A"/>
<rect x="769.95" y="278.50" width="2.40" height="2.40" fill="#D8D848"/>
<rect x="773.50" y="278.90" width="1.60" height="1.60" fill="#42422A"/>
<rect x="776.65" y="278.90" width="1.60" height="1.60" fill="#42422A"/>
<rect x="779.80" y="278.90" width="1.60" height="1.60" fill="#42422A"/>
<rect x="782.55" y="278.50" width="2.40" height="2.40" fill="#D8D848"/>
<rect x="707.35" y="281.80" width="1.60" height="1.60" fill="#42422A"/>
<rect x="710.50" y="281.80" width="1.60" height="1.60" fill="#42422A"/>
<rect x="713.65" y="281.80" width="1.60" height="1.60" fill="#42422A"/>
<rect x="716.80" y="281.80" width="1.60" height="1.60" fill="#42422A"/>
<rect x="719.95" y="281.80" width="1.60" height="1.60" fill="#42422A"/>
<rect x="723.10" y="281.80" width="1.60" height="1.60" fill="#42422A"/>
<rect x="726.25" y="281.80" width="1.60" height="1.60" fill="#42422A"/>
<rect x="729.40" y="281.80" width="1.60" height="1.60" fill="#42422A"/>
<rect x="732.55" y="281.80" width="1.60" height="1.60" fill="#42422A"/>
<rect x="735.70" y="281.80" width="1.60" height="1.60" fill="#42422A"/>
<rect x="738.85" y="281.80" width="1.60" height="1.60" fill="#42422A"/>
<rect x="742.00" y="281.80" width="1.60" height="1.60" fill="#42422A"/>
<rect x="745.15" y="281.80" width="1.60" height="1.60" fill="#42422A"/>
<rect x="748.30" y="281.80" width="1.60" height="1.60" fill="#42422A"/>
<rect x="751.45" y="281.80" width="1.60" height="1.60" fill="#42422A"/>
<rect x="754.60" y="281.80" width="1.60" height="1.60" fill="#42422A"/>
<rect x="757.35" y="281.40" width="2.40" height="2.40" fill="#D8D848"/>
<rect x="760.50" y="281.40" width="2.40" height="2.40" fill="#D8D848"/>
<rect x="764.05" y="281.80" width="1.60" height="1.60" fill="#42422A"/>
<rect x="767.20" y="281.80" width="1.60" height="1.60" fill="#42422A"/>
<rect x="770.35" y="281.80" width="1.60" height="1.60" fill="#42422A"/>
<rect x="773.10" y="281.40" width="2.40" height="2.40" fill="#D8D848"/>
<rect x="776.25" y="281.40" width="2.40" height="2.40" fill="#D8D848"/>
<rect x="779.40" y="281.40" width="2.40" height="2.40" fill="#D8D848"/>
<rect x="782.95" y="281.80" width="1.60" height="1.60" fill="#42422A"/>
<text x="703" y="302.70000000000005" font-size="10.2" fill="#000" font-weight="normal" text-anchor="start" textLength="37.3" lengthAdjust="spacingAndGlyphs" stroke="#000" stroke-width="0.22">Peak Fo</text>
<rect x="704.2" y="308.6" width="83.5" height="23" fill="#000" />
<rect x="705.2" y="309.6" width="81.5" height="21" fill="#080800" />
<rect x="707.35" y="310.60" width="1.60" height="1.60" fill="#42422A"/>
<rect x="710.50" y="310.60" width="1.60" height="1.60" fill="#42422A"/>
<rect x="713.65" y="310.60" width="1.60" height="1.60" fill="#42422A"/>
<rect x="716.80" y="310.60" width="1.60" height="1.60" fill="#42422A"/>
<rect x="719.95" y="310.60" width="1.60" height="1.60" fill="#42422A"/>
<rect x="723.10" y="310.60" width="1.60" height="1.60" fill="#42422A"/>
<rect x="726.25" y="310.60" width="1.60" height="1.60" fill="#42422A"/>
<rect x="729.40" y="310.60" width="1.60" height="1.60" fill="#42422A"/>
<rect x="732.55" y="310.60" width="1.60" height="1.60" fill="#42422A"/>
<rect x="735.70" y="310.60" width="1.60" height="1.60" fill="#42422A"/>
<rect x="738.85" y="310.60" width="1.60" height="1.60" fill="#42422A"/>
<rect x="742.00" y="310.60" width="1.60" height="1.60" fill="#42422A"/>
<rect x="745.15" y="310.60" width="1.60" height="1.60" fill="#42422A"/>
<rect x="748.30" y="310.60" width="1.60" height="1.60" fill="#42422A"/>
<rect x="751.45" y="310.60" width="1.60" height="1.60" fill="#42422A"/>
<rect x="754.60" y="310.60" width="1.60" height="1.60" fill="#42422A"/>
<rect x="757.75" y="310.60" width="1.60" height="1.60" fill="#42422A"/>
<rect x="760.90" y="310.60" width="1.60" height="1.60" fill="#42422A"/>
<rect x="763.65" y="310.20" width="2.40" height="2.40" fill="#D8D848"/>
<rect x="767.20" y="310.60" width="1.60" height="1.60" fill="#42422A"/>
<rect x="770.35" y="310.60" width="1.60" height="1.60" fill="#42422A"/>
<rect x="773.10" y="310.20" width="2.40" height="2.40" fill="#D8D848"/>
<rect x="776.25" y="310.20" width="2.40" height="2.40" fill="#D8D848"/>
<rect x="779.40" y="310.20" width="2.40" height="2.40" fill="#D8D848"/>
<rect x="782.95" y="310.60" width="1.60" height="1.60" fill="#42422A"/>
<rect x="707.35" y="313.50" width="1.60" height="1.60" fill="#42422A"/>
<rect x="710.50" y="313.50" width="1.60" height="1.60" fill="#42422A"/>
<rect x="713.65" y="313.50" width="1.60" height="1.60" fill="#42422A"/>
<rect x="716.80" y="313.50" width="1.60" height="1.60" fill="#42422A"/>
<rect x="719.95" y="313.50" width="1.60" height="1.60" fill="#42422A"/>
<rect x="723.10" y="313.50" width="1.60" height="1.60" fill="#42422A"/>
<rect x="726.25" y="313.50" width="1.60" height="1.60" fill="#42422A"/>
<rect x="729.40" y="313.50" width="1.60" height="1.60" fill="#42422A"/>
<rect x="732.55" y="313.50" width="1.60" height="1.60" fill="#42422A"/>
<rect x="735.70" y="313.50" width="1.60" height="1.60" fill="#42422A"/>
<rect x="738.85" y="313.50" width="1.60" height="1.60" fill="#42422A"/>
<rect x="742.00" y="313.50" width="1.60" height="1.60" fill="#42422A"/>
<rect x="745.15" y="313.50" width="1.60" height="1.60" fill="#42422A"/>
<rect x="748.30" y="313.50" width="1.60" height="1.60" fill="#42422A"/>
<rect x="751.45" y="313.50" width="1.60" height="1.60" fill="#42422A"/>
<rect x="754.60" y="313.50" width="1.60" height="1.60" fill="#42422A"/>
<rect x="757.75" y="313.50" width="1.60" height="1.60" fill="#42422A"/>
<rect x="760.50" y="313.10" width="2.40" height="2.40" fill="#D8D848"/>
<rect x="763.65" y="313.10" width="2.40" height="2.40" fill="#D8D848"/>
<rect x="767.20" y="313.50" width="1.60" height="1.60" fill="#42422A"/>
<rect x="769.95" y="313.10" width="2.40" height="2.40" fill="#D8D848"/>
<rect x="773.50" y="313.50" width="1.60" height="1.60" fill="#42422A"/>
<rect x="776.65" y="313.50" width="1.60" height="1.60" fill="#42422A"/>
<rect x="779.80" y="313.50" width="1.60" height="1.60" fill="#42422A"/>
<rect x="782.55" y="313.10" width="2.40" height="2.40" fill="#D8D848"/>
<rect x="707.35" y="316.40" width="1.60" height="1.60" fill="#42422A"/>
<rect x="710.50" y="316.40" width="1.60" height="1.60" fill="#42422A"/>
<rect x="713.65" y="316.40" width="1.60" height="1.60" fill="#42422A"/>
<rect x="716.80" y="316.40" width="1.60" height="1.60" fill="#42422A"/>
<rect x="719.95" y="316.40" width="1.60" height="1.60" fill="#42422A"/>
<rect x="723.10" y="316.40" width="1.60" height="1.60" fill="#42422A"/>
<rect x="726.25" y="316.40" width="1.60" height="1.60" fill="#42422A"/>
<rect x="729.40" y="316.40" width="1.60" height="1.60" fill="#42422A"/>
<rect x="732.55" y="316.40" width="1.60" height="1.60" fill="#42422A"/>
<rect x="735.70" y="316.40" width="1.60" height="1.60" fill="#42422A"/>
<rect x="738.85" y="316.40" width="1.60" height="1.60" fill="#42422A"/>
<rect x="742.00" y="316.40" width="1.60" height="1.60" fill="#42422A"/>
<rect x="745.15" y="316.40" width="1.60" height="1.60" fill="#42422A"/>
<rect x="748.30" y="316.40" width="1.60" height="1.60" fill="#42422A"/>
<rect x="751.45" y="316.40" width="1.60" height="1.60" fill="#42422A"/>
<rect x="754.60" y="316.40" width="1.60" height="1.60" fill="#42422A"/>
<rect x="757.35" y="316.00" width="2.40" height="2.40" fill="#D8D848"/>
<rect x="760.90" y="316.40" width="1.60" height="1.60" fill="#42422A"/>
<rect x="763.65" y="316.00" width="2.40" height="2.40" fill="#D8D848"/>
<rect x="767.20" y="316.40" width="1.60" height="1.60" fill="#42422A"/>
<rect x="770.35" y="316.40" width="1.60" height="1.60" fill="#42422A"/>
<rect x="773.50" y="316.40" width="1.60" height="1.60" fill="#42422A"/>
<rect x="776.65" y="316.40" width="1.60" height="1.60" fill="#42422A"/>
<rect x="779.80" y="316.40" width="1.60" height="1.60" fill="#42422A"/>
<rect x="782.55" y="316.00" width="2.40" height="2.40" fill="#D8D848"/>
<rect x="707.35" y="319.30" width="1.60" height="1.60" fill="#42422A"/>
<rect x="710.50" y="319.30" width="1.60" height="1.60" fill="#42422A"/>
<rect x="713.65" y="319.30" width="1.60" height="1.60" fill="#42422A"/>
<rect x="716.80" y="319.30" width="1.60" height="1.60" fill="#42422A"/>
<rect x="719.95" y="319.30" width="1.60" height="1.60" fill="#42422A"/>
<rect x="723.10" y="319.30" width="1.60" height="1.60" fill="#42422A"/>
<rect x="726.25" y="319.30" width="1.60" height="1.60" fill="#42422A"/>
<rect x="729.40" y="319.30" width="1.60" height="1.60" fill="#42422A"/>
<rect x="732.55" y="319.30" width="1.60" height="1.60" fill="#42422A"/>
<rect x="735.70" y="319.30" width="1.60" height="1.60" fill="#42422A"/>
<rect x="738.85" y="319.30" width="1.60" height="1.60" fill="#42422A"/>
<rect x="742.00" y="319.30" width="1.60" height="1.60" fill="#42422A"/>
<rect x="745.15" y="319.30" width="1.60" height="1.60" fill="#42422A"/>
<rect x="748.30" y="319.30" width="1.60" height="1.60" fill="#42422A"/>
<rect x="751.45" y="319.30" width="1.60" height="1.60" fill="#42422A"/>
<rect x="754.20" y="318.90" width="2.40" height="2.40" fill="#D8D848"/>
<rect x="757.75" y="319.30" width="1.60" height="1.60" fill="#42422A"/>
<rect x="760.90" y="319.30" width="1.60" height="1.60" fill="#42422A"/>
<rect x="763.65" y="318.90" width="2.40" height="2.40" fill="#D8D848"/>
<rect x="767.20" y="319.30" width="1.60" height="1.60" fill="#42422A"/>
<rect x="770.35" y="319.30" width="1.60" height="1.60" fill="#42422A"/>
<rect x="773.50" y="319.30" width="1.60" height="1.60" fill="#42422A"/>
<rect x="776.65" y="319.30" width="1.60" height="1.60" fill="#42422A"/>
<rect x="779.40" y="318.90" width="2.40" height="2.40" fill="#D8D848"/>
<rect x="782.95" y="319.30" width="1.60" height="1.60" fill="#42422A"/>
<rect x="707.35" y="322.20" width="1.60" height="1.60" fill="#42422A"/>
<rect x="710.50" y="322.20" width="1.60" height="1.60" fill="#42422A"/>
<rect x="713.65" y="322.20" width="1.60" height="1.60" fill="#42422A"/>
<rect x="716.80" y="322.20" width="1.60" height="1.60" fill="#42422A"/>
<rect x="719.95" y="322.20" width="1.60" height="1.60" fill="#42422A"/>
<rect x="723.10" y="322.20" width="1.60" height="1.60" fill="#42422A"/>
<rect x="726.25" y="322.20" width="1.60" height="1.60" fill="#42422A"/>
<rect x="729.40" y="322.20" width="1.60" height="1.60" fill="#42422A"/>
<rect x="732.55" y="322.20" width="1.60" height="1.60" fill="#42422A"/>
<rect x="735.70" y="322.20" width="1.60" height="1.60" fill="#42422A"/>
<rect x="738.85" y="322.20" width="1.60" height="1.60" fill="#42422A"/>
<rect x="742.00" y="322.20" width="1.60" height="1.60" fill="#42422A"/>
<rect x="745.15" y="322.20" width="1.60" height="1.60" fill="#42422A"/>
<rect x="748.30" y="322.20" width="1.60" height="1.60" fill="#42422A"/>
<rect x="751.45" y="322.20" width="1.60" height="1.60" fill="#42422A"/>
<rect x="754.20" y="321.80" width="2.40" height="2.40" fill="#D8D848"/>
<rect x="757.35" y="321.80" width="2.40" height="2.40" fill="#D8D848"/>
<rect x="760.50" y="321.80" width="2.40" height="2.40" fill="#D8D848"/>
<rect x="763.65" y="321.80" width="2.40" height="2.40" fill="#D8D848"/>
<rect x="766.80" y="321.80" width="2.40" height="2.40" fill="#D8D848"/>
<rect x="770.35" y="322.20" width="1.60" height="1.60" fill="#42422A"/>
<rect x="773.50" y="322.20" width="1.60" height="1.60" fill="#42422A"/>
<rect x="776.25" y="321.80" width="2.40" height="2.40" fill="#D8D848"/>
<rect x="779.80" y="322.20" width="1.60" height="1.60" fill="#42422A"/>
<rect x="782.95" y="322.20" width="1.60" height="1.60" fill="#42422A"/>
<rect x="707.35" y="325.10" width="1.60" height="1.60" fill="#42422A"/>
<rect x="710.50" y="325.10" width="1.60" height="1.60" fill="#42422A"/>
<rect x="713.65" y="325.10" width="1.60" height="1.60" fill="#42422A"/>
<rect x="716.80" y="325.10" width="1.60" height="1.60" fill="#42422A"/>
<rect x="719.95" y="325.10" width="1.60" height="1.60" fill="#42422A"/>
<rect x="723.10" y="325.10" width="1.60" height="1.60" fill="#42422A"/>
<rect x="726.25" y="325.10" width="1.60" height="1.60" fill="#42422A"/>
<rect x="729.40" y="325.10" width="1.60" height="1.60" fill="#42422A"/>
<rect x="732.55" y="325.10" width="1.60" height="1.60" fill="#42422A"/>
<rect x="735.70" y="325.10" width="1.60" height="1.60" fill="#42422A"/>
<rect x="738.85" y="325.10" width="1.60" height="1.60" fill="#42422A"/>
<rect x="742.00" y="325.10" width="1.60" height="1.60" fill="#42422A"/>
<rect x="745.15" y="325.10" width="1.60" height="1.60" fill="#42422A"/>
<rect x="748.30" y="325.10" width="1.60" height="1.60" fill="#42422A"/>
<rect x="751.45" y="325.10" width="1.60" height="1.60" fill="#42422A"/>
<rect x="754.60" y="325.10" width="1.60" height="1.60" fill="#42422A"/>
<rect x="757.75" y="325.10" width="1.60" height="1.60" fill="#42422A"/>
<rect x="760.90" y="325.10" width="1.60" height="1.60" fill="#42422A"/>
<rect x="763.65" y="324.70" width="2.40" height="2.40" fill="#D8D848"/>
<rect x="767.20" y="325.10" width="1.60" height="1.60" fill="#42422A"/>
<rect x="770.35" y="325.10" width="1.60" height="1.60" fill="#42422A"/>
<rect x="773.10" y="324.70" width="2.40" height="2.40" fill="#D8D848"/>
<rect x="776.65" y="325.10" width="1.60" height="1.60" fill="#42422A"/>
<rect x="779.80" y="325.10" width="1.60" height="1.60" fill="#42422A"/>
<rect x="782.95" y="325.10" width="1.60" height="1.60" fill="#42422A"/>
<rect x="707.35" y="328.00" width="1.60" height="1.60" fill="#42422A"/>
<rect x="710.50" y="328.00" width="1.60" height="1.60" fill="#42422A"/>
<rect x="713.65" y="328.00" width="1.60" height="1.60" fill="#42422A"/>
<rect x="716.80" y="328.00" width="1.60" height="1.60" fill="#42422A"/>
<rect x="719.95" y="328.00" width="1.60" height="1.60" fill="#42422A"/>
<rect x="723.10" y="328.00" width="1.60" height="1.60" fill="#42422A"/>
<rect x="726.25" y="328.00" width="1.60" height="1.60" fill="#42422A"/>
<rect x="729.40" y="328.00" width="1.60" height="1.60" fill="#42422A"/>
<rect x="732.55" y="328.00" width="1.60" height="1.60" fill="#42422A"/>
<rect x="735.70" y="328.00" width="1.60" height="1.60" fill="#42422A"/>
<rect x="738.85" y="328.00" width="1.60" height="1.60" fill="#42422A"/>
<rect x="742.00" y="328.00" width="1.60" height="1.60" fill="#42422A"/>
<rect x="745.15" y="328.00" width="1.60" height="1.60" fill="#42422A"/>
<rect x="748.30" y="328.00" width="1.60" height="1.60" fill="#42422A"/>
<rect x="751.45" y="328.00" width="1.60" height="1.60" fill="#42422A"/>
<rect x="754.60" y="328.00" width="1.60" height="1.60" fill="#42422A"/>
<rect x="757.75" y="328.00" width="1.60" height="1.60" fill="#42422A"/>
<rect x="760.90" y="328.00" width="1.60" height="1.60" fill="#42422A"/>
<rect x="763.65" y="327.60" width="2.40" height="2.40" fill="#D8D848"/>
<rect x="767.20" y="328.00" width="1.60" height="1.60" fill="#42422A"/>
<rect x="769.95" y="327.60" width="2.40" height="2.40" fill="#D8D848"/>
<rect x="773.10" y="327.60" width="2.40" height="2.40" fill="#D8D848"/>
<rect x="776.25" y="327.60" width="2.40" height="2.40" fill="#D8D848"/>
<rect x="779.40" y="327.60" width="2.40" height="2.40" fill="#D8D848"/>
<rect x="782.55" y="327.60" width="2.40" height="2.40" fill="#D8D848"/>
<text x="374.9" y="366.4" font-size="12.8" fill="#000" font-weight="bold" text-anchor="start" textLength="77.8" lengthAdjust="spacingAndGlyphs" >Oscilloscope</text>
<rect x="67" y="380.7" width="731" height="96" fill="#033803" />
<line x1="158.79000000000002" y1="380.7" x2="158.79000000000002" y2="476.7" stroke="#8A9A8A" stroke-width="1" />
<line x1="250.08" y1="380.7" x2="250.08" y2="476.7" stroke="#8A9A8A" stroke-width="1" />
<line x1="341.37" y1="380.7" x2="341.37" y2="476.7" stroke="#8A9A8A" stroke-width="1" />
<line x1="432.66" y1="380.7" x2="432.66" y2="476.7" stroke="#8A9A8A" stroke-width="1" />
<line x1="523.95" y1="380.7" x2="523.95" y2="476.7" stroke="#8A9A8A" stroke-width="1" />
<line x1="615.24" y1="380.7" x2="615.24" y2="476.7" stroke="#8A9A8A" stroke-width="1" />
<line x1="706.5300000000001" y1="380.7" x2="706.5300000000001" y2="476.7" stroke="#8A9A8A" stroke-width="1" />
<line x1="67" y1="429.5" x2="798" y2="429.5" stroke="#8A9A8A" stroke-width="1" />
<polyline points="67.50,439.54 68.93,456.46 70.35,466.37 71.78,466.69 73.21,457.33 74.63,440.74 76.06,421.22 77.48,403.86 78.91,393.16 80.34,391.92 81.76,400.45 83.19,416.54 84.62,436.00 86.04,453.77 87.47,465.23 88.90,467.39 90.32,459.69 91.75,444.15 93.17,424.79 94.60,406.66 96.03,394.47 97.45,391.39 98.88,398.23 100.31,413.20 101.73,432.41 103.16,450.86 104.59,463.76 106.01,467.75 107.44,461.78 108.86,447.42 110.29,428.40 111.72,409.66 113.14,396.09 114.57,391.20 116.00,396.28 117.42,410.00 118.85,428.79 120.28,447.77 121.70,461.99 123.13,467.77 124.55,463.59 125.98,450.54 127.41,432.02 128.83,412.84 130.26,398.00 131.69,391.35 133.11,394.63 134.54,406.97 135.97,425.18 137.39,444.51 138.82,459.93 140.24,467.44 141.67,465.08 143.10,453.47 144.52,435.62 145.95,416.18 147.38,400.20 148.80,391.85 150.23,393.29 151.66,404.15 153.08,421.60 154.51,441.11 155.93,457.60 157.36,466.78 158.79,466.26 160.21,456.18 161.64,439.16 163.07,419.63 164.49,402.66 165.92,392.68 167.35,392.27 168.77,401.55 170.20,418.10 171.62,437.61 173.05,455.02 174.48,465.78 175.90,467.11 177.33,458.66 178.76,442.62 180.18,423.17 181.61,405.36 183.04,393.84 184.46,391.59 185.89,399.20 187.31,414.70 188.74,434.04 190.17,452.21 191.59,464.46 193.02,467.63 194.45,460.87 195.87,445.96 197.30,426.76 198.73,408.28 200.15,395.31 201.58,391.24 203.00,397.12 204.43,411.43 205.86,430.43 207.28,449.19 208.71,462.83 210.14,467.80 211.56,462.81 212.99,449.15 214.42,430.38 215.84,411.38 217.27,397.10 218.69,391.24 220.12,395.34 221.55,408.32 222.97,426.81 224.40,446.00 225.83,460.90 227.25,467.63 228.68,464.44 230.11,452.17 231.53,433.99 232.96,414.65 234.38,399.17 235.81,391.58 237.24,393.85 238.66,405.40 240.09,423.21 241.52,442.66 242.94,458.69 244.37,467.12 245.80,465.77 247.22,454.98 248.65,437.57 250.07,418.05 251.50,401.52 252.93,392.26 254.35,392.69 255.78,402.70 257.21,419.67 258.63,439.21 260.06,456.22 261.49,466.28 262.91,466.77 264.34,457.57 265.77,441.07 267.19,421.56 268.62,404.11 270.04,393.27 271.47,391.86 272.90,400.23 274.32,416.22 275.75,435.66 277.18,453.50 278.60,465.10 280.03,467.44 281.46,459.90 282.88,444.46 284.31,425.13 285.73,406.93 287.16,394.61 288.59,391.36 290.01,398.03 291.44,412.89 292.87,432.07 294.29,450.58 295.72,463.61 297.15,467.76 298.57,461.97 300.00,447.73 301.42,428.74 302.85,409.96 304.28,396.25 305.70,391.20 307.13,396.11 308.56,409.70 309.98,428.45 311.41,447.46 312.84,461.81 314.26,467.75 315.69,463.74 317.11,450.83 318.54,432.36 319.97,413.15 321.39,398.20 322.82,391.39 324.25,394.49 325.67,406.69 327.10,424.84 328.53,444.19 329.95,459.72 331.38,467.39 332.80,465.21 334.23,453.73 335.66,435.96 337.08,416.50 338.51,400.42 339.94,391.91 341.36,393.18 342.79,403.89 344.22,421.27 345.64,440.78 347.07,457.37 348.49,466.70 349.92,466.36 351.35,456.43 352.77,439.49 354.20,419.96 355.63,402.91 357.05,392.77 358.48,392.19 359.91,401.32 361.33,417.77 362.76,437.28 364.18,454.76 365.61,465.67 367.04,467.18 368.46,458.88 369.89,442.94 371.32,423.50 372.74,405.63 374.17,393.96 375.60,391.54 377.02,398.99 378.45,414.38 379.87,433.70 381.30,451.93 382.73,464.32 384.15,467.66 385.58,461.07 387.01,446.27 388.43,427.10 389.86,408.56 391.29,395.47 392.71,391.23 394.14,396.94 395.56,411.12 396.99,430.09 398.42,448.90 399.84,462.66 401.27,467.80 402.70,462.98 404.12,449.44 405.55,430.72 406.98,411.69 408.40,397.28 409.83,391.26 411.25,395.18 412.68,408.03 414.11,426.47 415.53,445.69 416.96,460.70 418.39,467.60 419.81,464.58 421.24,452.44 422.67,434.33 424.09,414.97 425.52,399.38 426.94,391.63 428.37,393.73 429.80,405.13 431.22,422.87 432.65,442.34 434.08,458.46 435.50,467.06 436.93,465.88 438.36,455.24 439.78,437.90 441.21,418.38 442.63,401.75 444.06,392.34 445.49,392.60 446.91,402.45 448.34,419.34 449.77,438.87 451.19,455.97 452.62,466.18 454.05,466.85 455.47,457.80 456.90,441.39 458.32,421.89 459.75,404.37 461.18,393.38 462.60,391.79 464.03,400.01 465.46,415.90 466.88,435.33 468.31,453.24 469.74,464.97 471.16,467.48 472.59,460.11 474.01,444.78 475.44,425.47 476.87,407.21 478.29,394.75 479.72,391.33 481.15,397.84 482.57,412.58 484.00,431.72 485.43,450.29 486.85,463.45 488.28,467.78 489.70,462.15 491.13,448.03 492.56,429.09 493.98,410.25 495.41,396.43 496.84,391.20 498.26,395.94 499.69,409.41 501.12,428.10 502.54,447.16 503.97,461.62 505.39,467.73 506.82,463.89 508.25,451.11 509.67,432.70 511.10,413.47 512.53,398.40 513.95,391.42 515.38,394.35 516.81,406.42 518.23,424.49 519.66,443.87 521.08,459.51 522.51,467.34 523.94,465.33 525.36,454.00 526.79,436.29 528.22,416.82 529.64,400.65 531.07,391.98 532.50,393.07 533.92,403.64 535.35,420.93 536.77,440.45 538.20,457.13 539.63,466.62 541.05,466.45 542.48,456.67 543.91,439.82 545.33,420.29 546.76,403.16 548.19,392.87 549.61,392.12 551.04,401.08 552.46,417.44 553.89,436.94 555.32,454.50 556.74,465.56 558.17,467.24 559.60,459.10 561.02,443.26 562.45,423.84 563.88,405.90 565.30,394.09 566.73,391.50 568.15,398.79 569.58,414.06 571.01,433.36 572.43,451.65 573.86,464.18 575.29,467.69 576.71,461.26 578.14,446.57 579.57,427.45 580.99,408.85 582.42,395.63 583.84,391.22 585.27,396.76 586.70,410.82 588.12,429.74 589.55,448.60 590.98,462.49 592.40,467.79 593.83,463.14 595.26,449.74 596.68,431.07 598.11,411.99 599.53,397.47 600.96,391.28 602.39,395.03 603.81,407.75 605.24,426.12 606.67,445.38 608.09,460.50 609.52,467.56 610.95,464.72 612.37,452.72 613.80,434.68 615.22,415.29 616.65,399.60 618.08,391.68 619.50,393.61 620.93,404.87 622.36,422.54 623.78,442.02 625.21,458.24 626.64,466.99 628.06,465.98 629.49,455.49 630.92,438.24 632.34,418.71 633.77,401.99 635.19,392.43 636.62,392.51 638.05,402.21 639.47,419.01 640.90,438.54 642.33,455.72 643.75,466.08 645.18,466.92 646.61,458.03 648.03,441.72 649.46,422.23 650.88,404.63 652.31,393.50 653.74,391.74 655.16,399.79 656.59,415.58 658.02,434.99 659.44,452.97 660.87,464.84 662.30,467.52 663.72,460.32 665.15,445.09 666.57,425.81 668.00,407.49 669.43,394.90 670.85,391.30 672.28,397.64 673.71,412.27 675.13,431.38 676.56,450.00 677.99,463.29 679.41,467.79 680.84,462.33 682.26,448.33 683.69,429.43 685.12,410.55 686.54,396.60 687.97,391.21 689.40,395.78 690.82,409.12 692.25,427.76 693.68,446.86 695.10,461.44 696.53,467.71 697.95,464.04 699.38,451.39 700.81,433.05 702.23,413.78 703.66,398.60 705.09,391.46 706.51,394.21 707.94,406.15 709.37,424.15 710.79,443.55 712.22,459.30 713.64,467.29 715.07,465.45 716.50,454.26 717.92,436.63 719.35,417.15 720.78,400.88 722.20,392.05 723.63,392.96 725.06,403.38 726.48,420.60 727.91,440.13 729.33,456.89 730.76,466.53 732.19,466.54 733.61,456.91 735.04,440.15 736.47,420.63 737.89,403.41 739.32,392.97 740.75,392.04 742.17,400.86 743.60,417.12 745.02,436.60 746.45,454.24 747.88,465.44 749.30,467.29 750.73,459.31 752.16,443.58 753.58,424.18 755.01,406.17 756.44,394.23 757.86,391.46 759.29,398.58 760.71,413.75 762.14,433.02 763.57,451.37 764.99,464.03 766.42,467.71 767.85,461.45 769.27,446.88 770.70,427.79 772.13,409.14 773.55,395.79 774.98,391.21 776.40,396.59 777.83,410.52 779.26,429.40 780.68,448.30 782.11,462.31 783.54,467.79 784.96,463.30 786.39,450.03 787.82,431.41 789.24,412.30 790.67,397.66 792.09,391.30 793.52,394.88 794.95,407.47 796.37,425.78 797.80,445.06" fill="none" stroke="#22EE22" stroke-width="3" stroke-linejoin="round"/>
<line x1="51.5" y1="382" x2="51.5" y2="478" stroke="#303030" stroke-width="1.5" />
<line x1="51" y1="382.2" x2="65" y2="382.2" stroke="#D04848" stroke-width="1.5" />
<line x1="51" y1="391.76" x2="58" y2="391.76" stroke="#303030" stroke-width="1.5" />
<line x1="51" y1="401.32" x2="58" y2="401.32" stroke="#303030" stroke-width="1.5" />
<line x1="51" y1="410.88" x2="58" y2="410.88" stroke="#303030" stroke-width="1.5" />
<line x1="51" y1="420.44" x2="58" y2="420.44" stroke="#303030" stroke-width="1.5" />
<line x1="51" y1="430.0" x2="65" y2="430.0" stroke="#D04848" stroke-width="1.5" />
<line x1="51" y1="439.56" x2="58" y2="439.56" stroke="#303030" stroke-width="1.5" />
<line x1="51" y1="449.12" x2="58" y2="449.12" stroke="#303030" stroke-width="1.5" />
<line x1="51" y1="458.68" x2="58" y2="458.68" stroke="#303030" stroke-width="1.5" />
<line x1="51" y1="468.24" x2="58" y2="468.24" stroke="#303030" stroke-width="1.5" />
<line x1="51" y1="477.8" x2="65" y2="477.8" stroke="#D04848" stroke-width="1.5" />
<text x="47" y="385" font-size="10.4" fill="#000" font-weight="normal" text-anchor="end" stroke="#000" stroke-width="0.22">0.1</text>
<text x="47" y="433.3" font-size="10.4" fill="#000" font-weight="normal" text-anchor="end" stroke="#000" stroke-width="0.22">0.0</text>
<text x="47" y="481" font-size="10.4" fill="#000" font-weight="normal" text-anchor="end" stroke="#000" stroke-width="0.22">-0.1</text>
<line x1="67" y1="495" x2="798.5" y2="495" stroke="#303030" stroke-width="1.5" />
<line x1="67.5" y1="481.5" x2="67.5" y2="495" stroke="#D04848" stroke-width="1.5" />
<text x="66.9" y="505.5" font-size="10.4" fill="#000" font-weight="normal" text-anchor="middle" stroke="#000" stroke-width="0.22">0</text>
<line x1="90.3225" y1="487.5" x2="90.3225" y2="495" stroke="#202020" stroke-width="1.5" />
<line x1="113.14500000000001" y1="487.5" x2="113.14500000000001" y2="495" stroke="#202020" stroke-width="1.5" />
<line x1="135.9675" y1="487.5" x2="135.9675" y2="495" stroke="#202020" stroke-width="1.5" />
<line x1="158.79000000000002" y1="481.5" x2="158.79000000000002" y2="495" stroke="#D04848" stroke-width="1.5" />
<text x="158.19000000000003" y="505.5" font-size="10.4" fill="#000" font-weight="normal" text-anchor="middle" stroke="#000" stroke-width="0.22">64</text>
<line x1="181.6125" y1="487.5" x2="181.6125" y2="495" stroke="#202020" stroke-width="1.5" />
<line x1="204.435" y1="487.5" x2="204.435" y2="495" stroke="#202020" stroke-width="1.5" />
<line x1="227.25750000000002" y1="487.5" x2="227.25750000000002" y2="495" stroke="#202020" stroke-width="1.5" />
<line x1="250.08" y1="481.5" x2="250.08" y2="495" stroke="#D04848" stroke-width="1.5" />
<text x="249.48000000000002" y="505.5" font-size="10.4" fill="#000" font-weight="normal" text-anchor="middle" stroke="#000" stroke-width="0.22">128</text>
<line x1="272.90250000000003" y1="487.5" x2="272.90250000000003" y2="495" stroke="#202020" stroke-width="1.5" />
<line x1="295.725" y1="487.5" x2="295.725" y2="495" stroke="#202020" stroke-width="1.5" />
<line x1="318.5475" y1="487.5" x2="318.5475" y2="495" stroke="#202020" stroke-width="1.5" />
<line x1="341.37" y1="481.5" x2="341.37" y2="495" stroke="#D04848" stroke-width="1.5" />
<text x="340.77" y="505.5" font-size="10.4" fill="#000" font-weight="normal" text-anchor="middle" stroke="#000" stroke-width="0.22">192</text>
<line x1="364.1925" y1="487.5" x2="364.1925" y2="495" stroke="#202020" stroke-width="1.5" />
<line x1="387.01500000000004" y1="487.5" x2="387.01500000000004" y2="495" stroke="#202020" stroke-width="1.5" />
<line x1="409.83750000000003" y1="487.5" x2="409.83750000000003" y2="495" stroke="#202020" stroke-width="1.5" />
<line x1="432.66" y1="481.5" x2="432.66" y2="495" stroke="#D04848" stroke-width="1.5" />
<text x="432.06" y="505.5" font-size="10.4" fill="#000" font-weight="normal" text-anchor="middle" stroke="#000" stroke-width="0.22">256</text>
<line x1="455.4825" y1="487.5" x2="455.4825" y2="495" stroke="#202020" stroke-width="1.5" />
<line x1="478.305" y1="487.5" x2="478.305" y2="495" stroke="#202020" stroke-width="1.5" />
<line x1="501.12750000000005" y1="487.5" x2="501.12750000000005" y2="495" stroke="#202020" stroke-width="1.5" />
<line x1="523.95" y1="481.5" x2="523.95" y2="495" stroke="#D04848" stroke-width="1.5" />
<text x="523.35" y="505.5" font-size="10.4" fill="#000" font-weight="normal" text-anchor="middle" stroke="#000" stroke-width="0.22">320</text>
<line x1="546.7725" y1="487.5" x2="546.7725" y2="495" stroke="#202020" stroke-width="1.5" />
<line x1="569.595" y1="487.5" x2="569.595" y2="495" stroke="#202020" stroke-width="1.5" />
<line x1="592.4175" y1="487.5" x2="592.4175" y2="495" stroke="#202020" stroke-width="1.5" />
<line x1="615.24" y1="481.5" x2="615.24" y2="495" stroke="#D04848" stroke-width="1.5" />
<text x="614.64" y="505.5" font-size="10.4" fill="#000" font-weight="normal" text-anchor="middle" stroke="#000" stroke-width="0.22">384</text>
<line x1="638.0625" y1="487.5" x2="638.0625" y2="495" stroke="#202020" stroke-width="1.5" />
<line x1="660.885" y1="487.5" x2="660.885" y2="495" stroke="#202020" stroke-width="1.5" />
<line x1="683.7075000000001" y1="487.5" x2="683.7075000000001" y2="495" stroke="#202020" stroke-width="1.5" />
<line x1="706.5300000000001" y1="481.5" x2="706.5300000000001" y2="495" stroke="#D04848" stroke-width="1.5" />
<text x="705.9300000000001" y="505.5" font-size="10.4" fill="#000" font-weight="normal" text-anchor="middle" stroke="#000" stroke-width="0.22">448</text>
<line x1="729.3525000000001" y1="487.5" x2="729.3525000000001" y2="495" stroke="#202020" stroke-width="1.5" />
<line x1="752.1750000000001" y1="487.5" x2="752.1750000000001" y2="495" stroke="#202020" stroke-width="1.5" />
<line x1="774.9975000000001" y1="487.5" x2="774.9975000000001" y2="495" stroke="#202020" stroke-width="1.5" />
<line x1="797.82" y1="481.5" x2="797.82" y2="495" stroke="#D04848" stroke-width="1.5" />
<text x="790" y="505.5" font-size="10.4" fill="#000" font-weight="normal" text-anchor="middle" stroke="#000" stroke-width="0.22">512</text>
<rect x="28" y="518" width="771" height="155" fill="#F8F7F0" />
<rect x="29.5" y="519.5" width="769.5" height="153.5" fill="#8C8A7C" />
<rect x="29.5" y="519.5" width="768.5" height="152.5" fill="#ECE9D8" />
<text x="335.1" y="532.3" font-size="12.6" fill="#000" font-weight="bold" text-anchor="start" textLength="157.4" lengthAdjust="spacingAndGlyphs" >Spectrum Analyzer (1 Hz)</text>
<rect x="71" y="547" width="724" height="90" fill="#00004A" />
<line x1="71" y1="565.2" x2="795" y2="565.2" stroke="#9090B8" stroke-width="1.2" />
<line x1="71" y1="583.4" x2="795" y2="583.4" stroke="#9090B8" stroke-width="1.2" />
<line x1="71" y1="601.6" x2="795" y2="601.6" stroke="#9090B8" stroke-width="1.2" />
<line x1="71" y1="619.8" x2="795" y2="619.8" stroke="#9090B8" stroke-width="1.2" />
<rect x="319.92999999999995" y="592" width="7.2" height="45" fill="#F8F080" />
<rect x="327.96" y="578" width="7.2" height="59" fill="#F8F080" />
<rect x="335.98999999999995" y="589" width="7.2" height="48" fill="#F8F080" />
<rect x="665.2199999999999" y="631" width="7.2" height="6" fill="#F8F080" />
<line x1="53" y1="546" x2="53" y2="637" stroke="#303030" stroke-width="1.5" />
<line x1="53" y1="546.9" x2="66" y2="546.9" stroke="#D04848" stroke-width="1.5" />
<text x="50" y="549.9" font-size="10.4" fill="#000" font-weight="normal" text-anchor="end" stroke="#000" stroke-width="0.22">170</text>
<line x1="53" y1="550.55" x2="59" y2="550.55" stroke="#202020" stroke-width="1.1" />
<line x1="53" y1="554.1999999999999" x2="59" y2="554.1999999999999" stroke="#202020" stroke-width="1.1" />
<line x1="53" y1="557.85" x2="59" y2="557.85" stroke="#202020" stroke-width="1.1" />
<line x1="53" y1="561.5" x2="59" y2="561.5" stroke="#202020" stroke-width="1.1" />
<line x1="53" y1="565.15" x2="66" y2="565.15" stroke="#D04848" stroke-width="1.5" />
<text x="50" y="568.15" font-size="10.4" fill="#000" font-weight="normal" text-anchor="end" stroke="#000" stroke-width="0.22">160</text>
<line x1="53" y1="568.8" x2="59" y2="568.8" stroke="#202020" stroke-width="1.1" />
<line x1="53" y1="572.4499999999999" x2="59" y2="572.4499999999999" stroke="#202020" stroke-width="1.1" />
<line x1="53" y1="576.1" x2="59" y2="576.1" stroke="#202020" stroke-width="1.1" />
<line x1="53" y1="579.75" x2="59" y2="579.75" stroke="#202020" stroke-width="1.1" />
<line x1="53" y1="583.4" x2="66" y2="583.4" stroke="#D04848" stroke-width="1.5" />
<text x="50" y="586.4" font-size="10.4" fill="#000" font-weight="normal" text-anchor="end" stroke="#000" stroke-width="0.22">150</text>
<line x1="53" y1="587.05" x2="59" y2="587.05" stroke="#202020" stroke-width="1.1" />
<line x1="53" y1="590.6999999999999" x2="59" y2="590.6999999999999" stroke="#202020" stroke-width="1.1" />
<line x1="53" y1="594.35" x2="59" y2="594.35" stroke="#202020" stroke-width="1.1" />
<line x1="53" y1="598.0" x2="59" y2="598.0" stroke="#202020" stroke-width="1.1" />
<line x1="53" y1="601.65" x2="66" y2="601.65" stroke="#D04848" stroke-width="1.5" />
<text x="50" y="604.65" font-size="10.4" fill="#000" font-weight="normal" text-anchor="end" stroke="#000" stroke-width="0.22">140</text>
<line x1="53" y1="605.3" x2="59" y2="605.3" stroke="#202020" stroke-width="1.1" />
<line x1="53" y1="608.9499999999999" x2="59" y2="608.9499999999999" stroke="#202020" stroke-width="1.1" />
<line x1="53" y1="612.6" x2="59" y2="612.6" stroke="#202020" stroke-width="1.1" />
<line x1="53" y1="616.25" x2="59" y2="616.25" stroke="#202020" stroke-width="1.1" />
<line x1="53" y1="619.9" x2="66" y2="619.9" stroke="#D04848" stroke-width="1.5" />
<text x="50" y="622.9" font-size="10.4" fill="#000" font-weight="normal" text-anchor="end" stroke="#000" stroke-width="0.22">130</text>
<line x1="53" y1="623.55" x2="59" y2="623.55" stroke="#202020" stroke-width="1.1" />
<line x1="53" y1="627.1999999999999" x2="59" y2="627.1999999999999" stroke="#202020" stroke-width="1.1" />
<line x1="53" y1="630.85" x2="59" y2="630.85" stroke="#202020" stroke-width="1.1" />
<line x1="53" y1="634.5" x2="59" y2="634.5" stroke="#202020" stroke-width="1.1" />
<line x1="53" y1="638.15" x2="66" y2="638.15" stroke="#D04848" stroke-width="1.5" />
<text x="50" y="641.15" font-size="10.4" fill="#000" font-weight="normal" text-anchor="end" stroke="#000" stroke-width="0.22">120</text>
<line x1="71" y1="655" x2="795.5" y2="655" stroke="#303030" stroke-width="1.5" />
<line x1="71.0" y1="641" x2="71.0" y2="655" stroke="#D04848" stroke-width="1.5" />
<text x="73.0" y="666" font-size="10.4" fill="#000" font-weight="normal" text-anchor="middle" stroke="#000" stroke-width="0.22">10</text>
<line x1="87.0666" y1="647.5" x2="87.0666" y2="655" stroke="#202020" stroke-width="1.5" />
<line x1="103.1332" y1="647.5" x2="103.1332" y2="655" stroke="#202020" stroke-width="1.5" />
<line x1="119.19980000000001" y1="647.5" x2="119.19980000000001" y2="655" stroke="#202020" stroke-width="1.5" />
<line x1="135.2664" y1="647.5" x2="135.2664" y2="655" stroke="#202020" stroke-width="1.5" />
<line x1="151.333" y1="641" x2="151.333" y2="655" stroke="#D04848" stroke-width="1.5" />
<text x="150.833" y="666" font-size="10.4" fill="#000" font-weight="normal" text-anchor="middle" stroke="#000" stroke-width="0.22">20</text>
<line x1="167.39960000000002" y1="647.5" x2="167.39960000000002" y2="655" stroke="#202020" stroke-width="1.5" />
<line x1="183.46620000000001" y1="647.5" x2="183.46620000000001" y2="655" stroke="#202020" stroke-width="1.5" />
<line x1="199.5328" y1="647.5" x2="199.5328" y2="655" stroke="#202020" stroke-width="1.5" />
<line x1="215.5994" y1="647.5" x2="215.5994" y2="655" stroke="#202020" stroke-width="1.5" />
<line x1="231.666" y1="641" x2="231.666" y2="655" stroke="#D04848" stroke-width="1.5" />
<text x="231.166" y="666" font-size="10.4" fill="#000" font-weight="normal" text-anchor="middle" stroke="#000" stroke-width="0.22">30</text>
<line x1="247.73260000000002" y1="647.5" x2="247.73260000000002" y2="655" stroke="#202020" stroke-width="1.5" />
<line x1="263.79920000000004" y1="647.5" x2="263.79920000000004" y2="655" stroke="#202020" stroke-width="1.5" />
<line x1="279.86580000000004" y1="647.5" x2="279.86580000000004" y2="655" stroke="#202020" stroke-width="1.5" />
<line x1="295.93240000000003" y1="647.5" x2="295.93240000000003" y2="655" stroke="#202020" stroke-width="1.5" />
<line x1="311.999" y1="641" x2="311.999" y2="655" stroke="#D04848" stroke-width="1.5" />
<text x="311.499" y="666" font-size="10.4" fill="#000" font-weight="normal" text-anchor="middle" stroke="#000" stroke-width="0.22">40</text>
<line x1="328.0656" y1="647.5" x2="328.0656" y2="655" stroke="#202020" stroke-width="1.5" />
<line x1="344.1322" y1="647.5" x2="344.1322" y2="655" stroke="#202020" stroke-width="1.5" />
<line x1="360.1988" y1="647.5" x2="360.1988" y2="655" stroke="#202020" stroke-width="1.5" />
<line x1="376.2654" y1="647.5" x2="376.2654" y2="655" stroke="#202020" stroke-width="1.5" />
<line x1="392.332" y1="641" x2="392.332" y2="655" stroke="#D04848" stroke-width="1.5" />
<text x="391.832" y="666" font-size="10.4" fill="#000" font-weight="normal" text-anchor="middle" stroke="#000" stroke-width="0.22">50</text>
<line x1="408.39860000000004" y1="647.5" x2="408.39860000000004" y2="655" stroke="#202020" stroke-width="1.5" />
<line x1="424.46520000000004" y1="647.5" x2="424.46520000000004" y2="655" stroke="#202020" stroke-width="1.5" />
<line x1="440.53180000000003" y1="647.5" x2="440.53180000000003" y2="655" stroke="#202020" stroke-width="1.5" />
<line x1="456.5984" y1="647.5" x2="456.5984" y2="655" stroke="#202020" stroke-width="1.5" />
<line x1="472.665" y1="641" x2="472.665" y2="655" stroke="#D04848" stroke-width="1.5" />
<text x="472.165" y="666" font-size="10.4" fill="#000" font-weight="normal" text-anchor="middle" stroke="#000" stroke-width="0.22">60</text>
<line x1="488.7316" y1="647.5" x2="488.7316" y2="655" stroke="#202020" stroke-width="1.5" />
<line x1="504.7982" y1="647.5" x2="504.7982" y2="655" stroke="#202020" stroke-width="1.5" />
<line x1="520.8648000000001" y1="647.5" x2="520.8648000000001" y2="655" stroke="#202020" stroke-width="1.5" />
<line x1="536.9314" y1="647.5" x2="536.9314" y2="655" stroke="#202020" stroke-width="1.5" />
<line x1="552.998" y1="641" x2="552.998" y2="655" stroke="#D04848" stroke-width="1.5" />
<text x="552.498" y="666" font-size="10.4" fill="#000" font-weight="normal" text-anchor="middle" stroke="#000" stroke-width="0.22">70</text>
<line x1="569.0646" y1="647.5" x2="569.0646" y2="655" stroke="#202020" stroke-width="1.5" />
<line x1="585.1312" y1="647.5" x2="585.1312" y2="655" stroke="#202020" stroke-width="1.5" />
<line x1="601.1978" y1="647.5" x2="601.1978" y2="655" stroke="#202020" stroke-width="1.5" />
<line x1="617.2644" y1="647.5" x2="617.2644" y2="655" stroke="#202020" stroke-width="1.5" />
<line x1="633.331" y1="641" x2="633.331" y2="655" stroke="#D04848" stroke-width="1.5" />
<text x="632.831" y="666" font-size="10.4" fill="#000" font-weight="normal" text-anchor="middle" stroke="#000" stroke-width="0.22">80</text>
<line x1="649.3976" y1="647.5" x2="649.3976" y2="655" stroke="#202020" stroke-width="1.5" />
<line x1="665.4642" y1="647.5" x2="665.4642" y2="655" stroke="#202020" stroke-width="1.5" />
<line x1="681.5308" y1="647.5" x2="681.5308" y2="655" stroke="#202020" stroke-width="1.5" />
<line x1="697.5974" y1="647.5" x2="697.5974" y2="655" stroke="#202020" stroke-width="1.5" />
<line x1="713.664" y1="641" x2="713.664" y2="655" stroke="#D04848" stroke-width="1.5" />
<text x="713.164" y="666" font-size="10.4" fill="#000" font-weight="normal" text-anchor="middle" stroke="#000" stroke-width="0.22">90</text>
<line x1="729.7306000000001" y1="647.5" x2="729.7306000000001" y2="655" stroke="#202020" stroke-width="1.5" />
<line x1="745.7972000000001" y1="647.5" x2="745.7972000000001" y2="655" stroke="#202020" stroke-width="1.5" />
<line x1="761.8638000000001" y1="647.5" x2="761.8638000000001" y2="655" stroke="#202020" stroke-width="1.5" />
<line x1="777.9304000000001" y1="647.5" x2="777.9304000000001" y2="655" stroke="#202020" stroke-width="1.5" />
<line x1="793.9970000000001" y1="641" x2="793.9970000000001" y2="655" stroke="#D04848" stroke-width="1.5" />
<text x="787" y="666" font-size="10.4" fill="#000" font-weight="normal" text-anchor="middle" stroke="#000" stroke-width="0.22">100</text>
<rect x="832.5" y="104.5" width="155.5" height="73.5" fill="#000" />
<text x="850.4" y="164" font-size="64" fill="#FF1010" font-weight="bold" text-anchor="start" textLength="121" lengthAdjust="spacingAndGlyphs" >SPL</text>
<rect x="832.5" y="189.5" width="45" height="28" rx="3" fill="url(#btn)" stroke="#3A4C66" stroke-width="1.25"/>
<text x="855.0" y="207.8" font-size="10.6" fill="#000" font-weight="normal" text-anchor="middle" stroke="#000" stroke-width="0.22">Reset</text>
<rect x="888.5" y="189.5" width="45" height="28" rx="3" fill="#F4F3EE" stroke="#C9C7BA" stroke-width="1"/>
<text x="911.0" y="207.8" font-size="10.6" fill="#ACA899" font-weight="normal" text-anchor="middle" stroke="#ACA899" stroke-width="0.22">Start</text>
<rect x="944.5" y="189.5" width="44" height="28" rx="3" fill="#F4F3EE" stroke="#C9C7BA" stroke-width="1"/>
<text x="966.5" y="207.8" font-size="10.6" fill="#ACA899" font-weight="normal" text-anchor="middle" stroke="#ACA899" stroke-width="0.22">Stop</text>
<rect x="832.5" y="257.5" width="86" height="30" rx="3" fill="url(#btn)" stroke="#3A4C66" stroke-width="1.25"/>
<text x="875.5" y="275.8" font-size="10.6" fill="#000" font-weight="normal" text-anchor="middle" stroke="#000" stroke-width="0.22">Mode Select</text>
<rect x="935" y="249" width="50" height="48" fill="#FFFFFF" />
<line x1="935.5" y1="249" x2="935.5" y2="297" stroke="#808070" stroke-width="1.5" />
<line x1="935" y1="249.5" x2="985" y2="249.5" stroke="#808070" stroke-width="1.5" />
<circle cx="960.5" cy="273" r="24" fill="url(#logo)"/>
<circle cx="960.5" cy="273" r="22.5" fill="none" stroke="#505050" stroke-width="1.5"/>
<text x="944" y="287" font-size="41" font-weight="bold" fill="#B4F4A4" textLength="32" lengthAdjust="spacingAndGlyphs" stroke="#3C9C3C" stroke-width="0.6">SPL</text>
<circle cx="837.5" cy="341.1" r="6" fill="url(#radio)" stroke="#4A6488" stroke-width="1.1"/>
<text x="846.7" y="344.6" font-size="10.8" fill="#000" font-weight="normal" text-anchor="start" textLength="45.3" lengthAdjust="spacingAndGlyphs" stroke="#000" stroke-width="0.22">Real Time</text>
<circle cx="837.5" cy="356.5" r="6" fill="url(#radio)" stroke="#4A6488" stroke-width="1.1"/>
<text x="846.7" y="360.0" font-size="10.8" fill="#000" font-weight="normal" text-anchor="start" textLength="75.3" lengthAdjust="spacingAndGlyphs" stroke="#000" stroke-width="0.22">Rolling Average</text>
<circle cx="837.5" cy="371.90000000000003" r="6" fill="url(#radio)" stroke="#4A6488" stroke-width="1.1"/>
<circle cx="837.5" cy="371.90000000000003" r="2.8" fill="#2CA82C" stroke="#90D890" stroke-width="0.6"/>
<text x="846.7" y="375.40000000000003" font-size="10.8" fill="#000" font-weight="normal" text-anchor="start" textLength="46.3" lengthAdjust="spacingAndGlyphs" stroke="#000" stroke-width="0.22">Peak Hold</text>
<rect x="847.5" y="381.5" width="12" height="12" fill="url(#radio)" stroke="#4A6488" stroke-width="1"/>
<text x="863" y="390.8" font-size="10.8" fill="#000" font-weight="normal" text-anchor="start" textLength="52.8" lengthAdjust="spacingAndGlyphs" stroke="#000" stroke-width="0.22">Auto Reset</text>
<text x="950" y="335.8" font-size="10.6" fill="#000" font-weight="normal" text-anchor="start" stroke="#000" stroke-width="0.22">Samples</text>
<rect x="951.5" y="341.5" width="38.5" height="20" fill="#FFFFFF" stroke="#C9C7BA" stroke-width="1"/>
<text x="983" y="354.3" font-size="10.4" fill="#ACA899" font-weight="normal" text-anchor="end" stroke="#ACA899" stroke-width="0.22">5,00</text>
<text x="950" y="373.6" font-size="10.6" fill="#000" font-weight="normal" text-anchor="start" stroke="#000" stroke-width="0.22">Interval</text>
<path d="M951.5 396 L951.5 380.5 L990 380.5 L990 396" fill="#FFFFFF" stroke="#C9C7BA" stroke-width="1"/>
<text x="983" y="392.4" font-size="10.4" fill="#ACA899" font-weight="normal" text-anchor="end" stroke="#ACA899" stroke-width="0.22">10</text>
<text x="831" y="412.9" font-size="10.8" fill="#000" font-weight="normal" text-anchor="start" stroke="#000" stroke-width="0.22">Update Speed</text>
<rect x="831.5" y="418.5" width="159" height="20" fill="#FFFFFF" stroke="#7F9DB9" stroke-width="1"/>
<text x="835" y="432.7" font-size="10.8" fill="#000" font-weight="normal" text-anchor="start" stroke="#000" stroke-width="0.22">1X - 256 Hz Max</text>
<rect x="974.5" y="420" width="14.5" height="17" rx="1.5" fill="#C4D4F8" stroke="#B8C8F0" stroke-width="1"/>
<path d="M978.5 426.5 L981.8 430 L985 426.5" fill="none" stroke="#4D6185" stroke-width="2"/>
<rect x="832.5" y="449.5" width="46" height="29" rx="3" fill="url(#btn)" stroke="#3A4C66" stroke-width="1.25"/>
<text x="855.5" y="467.3" font-size="10.6" fill="#000" font-weight="normal" text-anchor="middle" stroke="#000" stroke-width="0.22">Reset</text>
<rect x="888.5" y="449.5" width="46" height="29" rx="3" fill="url(#btn)" stroke="#3A4C66" stroke-width="1.25"/>
<text x="911.5" y="467.3" font-size="10.6" fill="#000" font-weight="normal" text-anchor="middle" stroke="#000" stroke-width="0.22">PVC</text>
<text x="831" y="596.6" font-size="10.6" fill="#000" font-weight="normal" text-anchor="start" stroke="#000" stroke-width="0.22">Freq (Hz)</text>
<text x="902.5" y="596.6" font-size="10.6" fill="#000" font-weight="normal" text-anchor="start" stroke="#000" stroke-width="0.22">SPL (dB)</text>
<rect x="832.4" y="602" width="51" height="23.4" fill="#000" />
<rect x="833.4" y="603" width="49" height="21.4" fill="#080800" />
<rect x="835.05" y="604.20" width="1.60" height="1.60" fill="#42422A"/>
<rect x="838.20" y="604.20" width="1.60" height="1.60" fill="#42422A"/>
<rect x="841.35" y="604.20" width="1.60" height="1.60" fill="#42422A"/>
<rect x="844.50" y="604.20" width="1.60" height="1.60" fill="#42422A"/>
<rect x="847.65" y="604.20" width="1.60" height="1.60" fill="#42422A"/>
<rect x="850.80" y="604.20" width="1.60" height="1.60" fill="#42422A"/>
<rect x="853.95" y="604.20" width="1.60" height="1.60" fill="#42422A"/>
<rect x="857.10" y="604.20" width="1.60" height="1.60" fill="#42422A"/>
<rect x="860.25" y="604.20" width="1.60" height="1.60" fill="#42422A"/>
<rect x="863.40" y="604.20" width="1.60" height="1.60" fill="#42422A"/>
<rect x="866.55" y="604.20" width="1.60" height="1.60" fill="#42422A"/>
<rect x="869.30" y="603.80" width="2.40" height="2.40" fill="#D8D848"/>
<rect x="872.45" y="603.80" width="2.40" height="2.40" fill="#D8D848"/>
<rect x="875.60" y="603.80" width="2.40" height="2.40" fill="#D8D848"/>
<rect x="879.15" y="604.20" width="1.60" height="1.60" fill="#42422A"/>
<rect x="835.05" y="607.10" width="1.60" height="1.60" fill="#42422A"/>
<rect x="838.20" y="607.10" width="1.60" height="1.60" fill="#42422A"/>
<rect x="841.35" y="607.10" width="1.60" height="1.60" fill="#42422A"/>
<rect x="844.50" y="607.10" width="1.60" height="1.60" fill="#42422A"/>
<rect x="847.65" y="607.10" width="1.60" height="1.60" fill="#42422A"/>
<rect x="850.80" y="607.10" width="1.60" height="1.60" fill="#42422A"/>
<rect x="853.95" y="607.10" width="1.60" height="1.60" fill="#42422A"/>
<rect x="857.10" y="607.10" width="1.60" height="1.60" fill="#42422A"/>
<rect x="860.25" y="607.10" width="1.60" height="1.60" fill="#42422A"/>
<rect x="863.40" y="607.10" width="1.60" height="1.60" fill="#42422A"/>
<rect x="866.15" y="606.70" width="2.40" height="2.40" fill="#D8D848"/>
<rect x="869.70" y="607.10" width="1.60" height="1.60" fill="#42422A"/>
<rect x="872.85" y="607.10" width="1.60" height="1.60" fill="#42422A"/>
<rect x="876.00" y="607.10" width="1.60" height="1.60" fill="#42422A"/>
<rect x="878.75" y="606.70" width="2.40" height="2.40" fill="#D8D848"/>
<rect x="835.05" y="610.00" width="1.60" height="1.60" fill="#42422A"/>
<rect x="838.20" y="610.00" width="1.60" height="1.60" fill="#42422A"/>
<rect x="841.35" y="610.00" width="1.60" height="1.60" fill="#42422A"/>
<rect x="844.50" y="610.00" width="1.60" height="1.60" fill="#42422A"/>
<rect x="847.65" y="610.00" width="1.60" height="1.60" fill="#42422A"/>
<rect x="850.80" y="610.00" width="1.60" height="1.60" fill="#42422A"/>
<rect x="853.95" y="610.00" width="1.60" height="1.60" fill="#42422A"/>
<rect x="857.10" y="610.00" width="1.60" height="1.60" fill="#42422A"/>
<rect x="860.25" y="610.00" width="1.60" height="1.60" fill="#42422A"/>
<rect x="863.40" y="610.00" width="1.60" height="1.60" fill="#42422A"/>
<rect x="866.15" y="609.60" width="2.40" height="2.40" fill="#D8D848"/>
<rect x="869.70" y="610.00" width="1.60" height="1.60" fill="#42422A"/>
<rect x="872.85" y="610.00" width="1.60" height="1.60" fill="#42422A"/>
<rect x="875.60" y="609.60" width="2.40" height="2.40" fill="#D8D848"/>
<rect x="878.75" y="609.60" width="2.40" height="2.40" fill="#D8D848"/>
<rect x="835.05" y="612.90" width="1.60" height="1.60" fill="#42422A"/>
<rect x="838.20" y="612.90" width="1.60" height="1.60" fill="#42422A"/>
<rect x="841.35" y="612.90" width="1.60" height="1.60" fill="#42422A"/>
<rect x="844.50" y="612.90" width="1.60" height="1.60" fill="#42422A"/>
<rect x="847.65" y="612.90" width="1.60" height="1.60" fill="#42422A"/>
<rect x="850.80" y="612.90" width="1.60" height="1.60" fill="#42422A"/>
<rect x="853.95" y="612.90" width="1.60" height="1.60" fill="#42422A"/>
<rect x="857.10" y="612.90" width="1.60" height="1.60" fill="#42422A"/>
<rect x="860.25" y="612.90" width="1.60" height="1.60" fill="#42422A"/>
<rect x="863.40" y="612.90" width="1.60" height="1.60" fill="#42422A"/>
<rect x="866.15" y="612.50" width="2.40" height="2.40" fill="#D8D848"/>
<rect x="869.70" y="612.90" width="1.60" height="1.60" fill="#42422A"/>
<rect x="872.45" y="612.50" width="2.40" height="2.40" fill="#D8D848"/>
<rect x="876.00" y="612.90" width="1.60" height="1.60" fill="#42422A"/>
<rect x="878.75" y="612.50" width="2.40" height="2.40" fill="#D8D848"/>
<rect x="835.05" y="615.80" width="1.60" height="1.60" fill="#42422A"/>
<rect x="838.20" y="615.80" width="1.60" height="1.60" fill="#42422A"/>
<rect x="841.35" y="615.80" width="1.60" height="1.60" fill="#42422A"/>
<rect x="844.50" y="615.80" width="1.60" height="1.60" fill="#42422A"/>
<rect x="847.65" y="615.80" width="1.60" height="1.60" fill="#42422A"/>
<rect x="850.80" y="615.80" width="1.60" height="1.60" fill="#42422A"/>
<rect x="853.95" y="615.80" width="1.60" height="1.60" fill="#42422A"/>
<rect x="857.10" y="615.80" width="1.60" height="1.60" fill="#42422A"/>
<rect x="860.25" y="615.80" width="1.60" height="1.60" fill="#42422A"/>
<rect x="863.40" y="615.80" width="1.60" height="1.60" fill="#42422A"/>
<rect x="866.15" y="615.40" width="2.40" height="2.40" fill="#D8D848"/>
<rect x="869.30" y="615.40" width="2.40" height="2.40" fill="#D8D848"/>
<rect x="872.85" y="615.80" width="1.60" height="1.60" fill="#42422A"/>
<rect x="876.00" y="615.80" width="1.60" height="1.60" fill="#42422A"/>
<rect x="878.75" y="615.40" width="2.40" height="2.40" fill="#D8D848"/>
<rect x="835.05" y="618.70" width="1.60" height="1.60" fill="#42422A"/>
<rect x="838.20" y="618.70" width="1.60" height="1.60" fill="#42422A"/>
<rect x="841.35" y="618.70" width="1.60" height="1.60" fill="#42422A"/>
<rect x="844.50" y="618.70" width="1.60" height="1.60" fill="#42422A"/>
<rect x="847.65" y="618.70" width="1.60" height="1.60" fill="#42422A"/>
<rect x="850.80" y="618.70" width="1.60" height="1.60" fill="#42422A"/>
<rect x="853.95" y="618.70" width="1.60" height="1.60" fill="#42422A"/>
<rect x="857.10" y="618.70" width="1.60" height="1.60" fill="#42422A"/>
<rect x="860.25" y="618.70" width="1.60" height="1.60" fill="#42422A"/>
<rect x="863.40" y="618.70" width="1.60" height="1.60" fill="#42422A"/>
<rect x="866.15" y="618.30" width="2.40" height="2.40" fill="#D8D848"/>
<rect x="869.70" y="618.70" width="1.60" height="1.60" fill="#42422A"/>
<rect x="872.85" y="618.70" width="1.60" height="1.60" fill="#42422A"/>
<rect x="876.00" y="618.70" width="1.60" height="1.60" fill="#42422A"/>
<rect x="878.75" y="618.30" width="2.40" height="2.40" fill="#D8D848"/>
<rect x="835.05" y="621.60" width="1.60" height="1.60" fill="#42422A"/>
<rect x="838.20" y="621.60" width="1.60" height="1.60" fill="#42422A"/>
<rect x="841.35" y="621.60" width="1.60" height="1.60" fill="#42422A"/>
<rect x="844.50" y="621.60" width="1.60" height="1.60" fill="#42422A"/>
<rect x="847.65" y="621.60" width="1.60" height="1.60" fill="#42422A"/>
<rect x="850.80" y="621.60" width="1.60" height="1.60" fill="#42422A"/>
<rect x="853.95" y="621.60" width="1.60" height="1.60" fill="#42422A"/>
<rect x="857.10" y="621.60" width="1.60" height="1.60" fill="#42422A"/>
<rect x="860.25" y="621.60" width="1.60" height="1.60" fill="#42422A"/>
<rect x="863.40" y="621.60" width="1.60" height="1.60" fill="#42422A"/>
<rect x="866.55" y="621.60" width="1.60" height="1.60" fill="#42422A"/>
<rect x="869.30" y="621.20" width="2.40" height="2.40" fill="#D8D848"/>
<rect x="872.45" y="621.20" width="2.40" height="2.40" fill="#D8D848"/>
<rect x="875.60" y="621.20" width="2.40" height="2.40" fill="#D8D848"/>
<rect x="879.15" y="621.60" width="1.60" height="1.60" fill="#42422A"/>
<rect x="903.4" y="602" width="83.5" height="23.4" fill="#000" />
<rect x="904.4" y="603" width="81.5" height="21.4" fill="#080800" />
<rect x="906.55" y="604.20" width="1.60" height="1.60" fill="#42422A"/>
<rect x="909.70" y="604.20" width="1.60" height="1.60" fill="#42422A"/>
<rect x="912.85" y="604.20" width="1.60" height="1.60" fill="#42422A"/>
<rect x="916.00" y="604.20" width="1.60" height="1.60" fill="#42422A"/>
<rect x="919.15" y="604.20" width="1.60" height="1.60" fill="#42422A"/>
<rect x="922.30" y="604.20" width="1.60" height="1.60" fill="#42422A"/>
<rect x="925.45" y="604.20" width="1.60" height="1.60" fill="#42422A"/>
<rect x="928.60" y="604.20" width="1.60" height="1.60" fill="#42422A"/>
<rect x="931.75" y="604.20" width="1.60" height="1.60" fill="#42422A"/>
<rect x="934.90" y="604.20" width="1.60" height="1.60" fill="#42422A"/>
<rect x="938.05" y="604.20" width="1.60" height="1.60" fill="#42422A"/>
<rect x="940.80" y="603.80" width="2.40" height="2.40" fill="#D8D848"/>
<rect x="943.95" y="603.80" width="2.40" height="2.40" fill="#D8D848"/>
<rect x="947.10" y="603.80" width="2.40" height="2.40" fill="#D8D848"/>
<rect x="950.65" y="604.20" width="1.60" height="1.60" fill="#42422A"/>
<rect x="953.80" y="604.20" width="1.60" height="1.60" fill="#42422A"/>
<rect x="956.95" y="604.20" width="1.60" height="1.60" fill="#42422A"/>
<rect x="960.10" y="604.20" width="1.60" height="1.60" fill="#42422A"/>
<rect x="963.25" y="604.20" width="1.60" height="1.60" fill="#42422A"/>
<rect x="966.40" y="604.20" width="1.60" height="1.60" fill="#42422A"/>
<rect x="969.55" y="604.20" width="1.60" height="1.60" fill="#42422A"/>
<rect x="972.30" y="603.80" width="2.40" height="2.40" fill="#D8D848"/>
<rect x="975.45" y="603.80" width="2.40" height="2.40" fill="#D8D848"/>
<rect x="978.60" y="603.80" width="2.40" height="2.40" fill="#D8D848"/>
<rect x="982.15" y="604.20" width="1.60" height="1.60" fill="#42422A"/>
<rect x="906.55" y="607.10" width="1.60" height="1.60" fill="#42422A"/>
<rect x="909.70" y="607.10" width="1.60" height="1.60" fill="#42422A"/>
<rect x="912.85" y="607.10" width="1.60" height="1.60" fill="#42422A"/>
<rect x="916.00" y="607.10" width="1.60" height="1.60" fill="#42422A"/>
<rect x="919.15" y="607.10" width="1.60" height="1.60" fill="#42422A"/>
<rect x="922.30" y="607.10" width="1.60" height="1.60" fill="#42422A"/>
<rect x="925.45" y="607.10" width="1.60" height="1.60" fill="#42422A"/>
<rect x="928.60" y="607.10" width="1.60" height="1.60" fill="#42422A"/>
<rect x="931.75" y="607.10" width="1.60" height="1.60" fill="#42422A"/>
<rect x="934.90" y="607.10" width="1.60" height="1.60" fill="#42422A"/>
<rect x="937.65" y="606.70" width="2.40" height="2.40" fill="#D8D848"/>
<rect x="941.20" y="607.10" width="1.60" height="1.60" fill="#42422A"/>
<rect x="944.35" y="607.10" width="1.60" height="1.60" fill="#42422A"/>
<rect x="947.50" y="607.10" width="1.60" height="1.60" fill="#42422A"/>
<rect x="950.25" y="606.70" width="2.40" height="2.40" fill="#D8D848"/>
<rect x="953.80" y="607.10" width="1.60" height="1.60" fill="#42422A"/>
<rect x="956.95" y="607.10" width="1.60" height="1.60" fill="#42422A"/>
<rect x="960.10" y="607.10" width="1.60" height="1.60" fill="#42422A"/>
<rect x="963.25" y="607.10" width="1.60" height="1.60" fill="#42422A"/>
<rect x="966.40" y="607.10" width="1.60" height="1.60" fill="#42422A"/>
<rect x="969.15" y="606.70" width="2.40" height="2.40" fill="#D8D848"/>
<rect x="972.70" y="607.10" width="1.60" height="1.60" fill="#42422A"/>
<rect x="975.85" y="607.10" width="1.60" height="1.60" fill="#42422A"/>
<rect x="979.00" y="607.10" width="1.60" height="1.60" fill="#42422A"/>
<rect x="981.75" y="606.70" width="2.40" height="2.40" fill="#D8D848"/>
<rect x="906.55" y="610.00" width="1.60" height="1.60" fill="#42422A"/>
<rect x="909.70" y="610.00" width="1.60" height="1.60" fill="#42422A"/>
<rect x="912.85" y="610.00" width="1.60" height="1.60" fill="#42422A"/>
<rect x="916.00" y="610.00" width="1.60" height="1.60" fill="#42422A"/>
<rect x="919.15" y="610.00" width="1.60" height="1.60" fill="#42422A"/>
<rect x="922.30" y="610.00" width="1.60" height="1.60" fill="#42422A"/>
<rect x="925.45" y="610.00" width="1.60" height="1.60" fill="#42422A"/>
<rect x="928.60" y="610.00" width="1.60" height="1.60" fill="#42422A"/>
<rect x="931.75" y="610.00" width="1.60" height="1.60" fill="#42422A"/>
<rect x="934.90" y="610.00" width="1.60" height="1.60" fill="#42422A"/>
<rect x="937.65" y="609.60" width="2.40" height="2.40" fill="#D8D848"/>
<rect x="941.20" y="610.00" width="1.60" height="1.60" fill="#42422A"/>
<rect x="944.35" y="610.00" width="1.60" height="1.60" fill="#42422A"/>
<rect x="947.10" y="609.60" width="2.40" height="2.40" fill="#D8D848"/>
<rect x="950.25" y="609.60" width="2.40" height="2.40" fill="#D8D848"/>
<rect x="953.80" y="610.00" width="1.60" height="1.60" fill="#42422A"/>
<rect x="956.95" y="610.00" width="1.60" height="1.60" fill="#42422A"/>
<rect x="960.10" y="610.00" width="1.60" height="1.60" fill="#42422A"/>
<rect x="963.25" y="610.00" width="1.60" height="1.60" fill="#42422A"/>
<rect x="966.40" y="610.00" width="1.60" height="1.60" fill="#42422A"/>
<rect x="969.15" y="609.60" width="2.40" height="2.40" fill="#D8D848"/>
<rect x="972.70" y="610.00" width="1.60" height="1.60" fill="#42422A"/>
<rect x="975.85" y="610.00" width="1.60" height="1.60" fill="#42422A"/>
<rect x="978.60" y="609.60" width="2.40" height="2.40" fill="#D8D848"/>
<rect x="981.75" y="609.60" width="2.40" height="2.40" fill="#D8D848"/>
<rect x="906.55" y="612.90" width="1.60" height="1.60" fill="#42422A"/>
<rect x="909.70" y="612.90" width="1.60" height="1.60" fill="#42422A"/>
<rect x="912.85" y="612.90" width="1.60" height="1.60" fill="#42422A"/>
<rect x="916.00" y="612.90" width="1.60" height="1.60" fill="#42422A"/>
<rect x="919.15" y="612.90" width="1.60" height="1.60" fill="#42422A"/>
<rect x="922.30" y="612.90" width="1.60" height="1.60" fill="#42422A"/>
<rect x="925.45" y="612.90" width="1.60" height="1.60" fill="#42422A"/>
<rect x="928.60" y="612.90" width="1.60" height="1.60" fill="#42422A"/>
<rect x="931.75" y="612.90" width="1.60" height="1.60" fill="#42422A"/>
<rect x="934.90" y="612.90" width="1.60" height="1.60" fill="#42422A"/>
<rect x="937.65" y="612.50" width="2.40" height="2.40" fill="#D8D848"/>
<rect x="941.20" y="612.90" width="1.60" height="1.60" fill="#42422A"/>
<rect x="943.95" y="612.50" width="2.40" height="2.40" fill="#D8D848"/>
<rect x="947.50" y="612.90" width="1.60" height="1.60" fill="#42422A"/>
<rect x="950.25" y="612.50" width="2.40" height="2.40" fill="#D8D848"/>
<rect x="953.80" y="612.90" width="1.60" height="1.60" fill="#42422A"/>
<rect x="956.95" y="612.90" width="1.60" height="1.60" fill="#42422A"/>
<rect x="960.10" y="612.90" width="1.60" height="1.60" fill="#42422A"/>
<rect x="963.25" y="612.90" width="1.60" height="1.60" fill="#42422A"/>
<rect x="966.40" y="612.90" width="1.60" height="1.60" fill="#42422A"/>
<rect x="969.15" y="612.50" width="2.40" height="2.40" fill="#D8D848"/>
<rect x="972.70" y="612.90" width="1.60" height="1.60" fill="#42422A"/>
<rect x="975.45" y="612.50" width="2.40" height="2.40" fill="#D8D848"/>
<rect x="979.00" y="612.90" width="1.60" height="1.60" fill="#42422A"/>
<rect x="981.75" y="612.50" width="2.40" height="2.40" fill="#D8D848"/>
<rect x="906.55" y="615.80" width="1.60" height="1.60" fill="#42422A"/>
<rect x="909.70" y="615.80" width="1.60" height="1.60" fill="#42422A"/>
<rect x="912.85" y="615.80" width="1.60" height="1.60" fill="#42422A"/>
<rect x="916.00" y="615.80" width="1.60" height="1.60" fill="#42422A"/>
<rect x="919.15" y="615.80" width="1.60" height="1.60" fill="#42422A"/>
<rect x="922.30" y="615.80" width="1.60" height="1.60" fill="#42422A"/>
<rect x="925.45" y="615.80" width="1.60" height="1.60" fill="#42422A"/>
<rect x="928.60" y="615.80" width="1.60" height="1.60" fill="#42422A"/>
<rect x="931.75" y="615.80" width="1.60" height="1.60" fill="#42422A"/>
<rect x="934.90" y="615.80" width="1.60" height="1.60" fill="#42422A"/>
<rect x="937.65" y="615.40" width="2.40" height="2.40" fill="#D8D848"/>
<rect x="940.80" y="615.40" width="2.40" height="2.40" fill="#D8D848"/>
<rect x="944.35" y="615.80" width="1.60" height="1.60" fill="#42422A"/>
<rect x="947.50" y="615.80" width="1.60" height="1.60" fill="#42422A"/>
<rect x="950.25" y="615.40" width="2.40" height="2.40" fill="#D8D848"/>
<rect x="953.80" y="615.80" width="1.60" height="1.60" fill="#42422A"/>
<rect x="956.95" y="615.80" width="1.60" height="1.60" fill="#42422A"/>
<rect x="960.10" y="615.80" width="1.60" height="1.60" fill="#42422A"/>
<rect x="963.25" y="615.80" width="1.60" height="1.60" fill="#42422A"/>
<rect x="966.40" y="615.80" width="1.60" height="1.60" fill="#42422A"/>
<rect x="969.15" y="615.40" width="2.40" height="2.40" fill="#D8D848"/>
<rect x="972.30" y="615.40" width="2.40" height="2.40" fill="#D8D848"/>
<rect x="975.85" y="615.80" width="1.60" height="1.60" fill="#42422A"/>
<rect x="979.00" y="615.80" width="1.60" height="1.60" fill="#42422A"/>
<rect x="981.75" y="615.40" width="2.40" height="2.40" fill="#D8D848"/>
<rect x="906.55" y="618.70" width="1.60" height="1.60" fill="#42422A"/>
<rect x="909.70" y="618.70" width="1.60" height="1.60" fill="#42422A"/>
<rect x="912.85" y="618.70" width="1.60" height="1.60" fill="#42422A"/>
<rect x="916.00" y="618.70" width="1.60" height="1.60" fill="#42422A"/>
<rect x="919.15" y="618.70" width="1.60" height="1.60" fill="#42422A"/>
<rect x="922.30" y="618.70" width="1.60" height="1.60" fill="#42422A"/>
<rect x="925.45" y="618.70" width="1.60" height="1.60" fill="#42422A"/>
<rect x="928.60" y="618.70" width="1.60" height="1.60" fill="#42422A"/>
<rect x="931.75" y="618.70" width="1.60" height="1.60" fill="#42422A"/>
<rect x="934.90" y="618.70" width="1.60" height="1.60" fill="#42422A"/>
<rect x="937.65" y="618.30" width="2.40" height="2.40" fill="#D8D848"/>
<rect x="941.20" y="618.70" width="1.60" height="1.60" fill="#42422A"/>
<rect x="944.35" y="618.70" width="1.60" height="1.60" fill="#42422A"/>
<rect x="947.50" y="618.70" width="1.60" height="1.60" fill="#42422A"/>
<rect x="950.25" y="618.30" width="2.40" height="2.40" fill="#D8D848"/>
<rect x="953.80" y="618.70" width="1.60" height="1.60" fill="#42422A"/>
<rect x="956.95" y="618.70" width="1.60" height="1.60" fill="#42422A"/>
<rect x="959.70" y="618.30" width="2.40" height="2.40" fill="#D8D848"/>
<rect x="963.25" y="618.70" width="1.60" height="1.60" fill="#42422A"/>
<rect x="966.40" y="618.70" width="1.60" height="1.60" fill="#42422A"/>
<rect x="969.15" y="618.30" width="2.40" height="2.40" fill="#D8D848"/>
<rect x="972.70" y="618.70" width="1.60" height="1.60" fill="#42422A"/>
<rect x="975.85" y="618.70" width="1.60" height="1.60" fill="#42422A"/>
<rect x="979.00" y="618.70" width="1.60" height="1.60" fill="#42422A"/>
<rect x="981.75" y="618.30" width="2.40" height="2.40" fill="#D8D848"/>
<rect x="906.55" y="621.60" width="1.60" height="1.60" fill="#42422A"/>
<rect x="909.70" y="621.60" width="1.60" height="1.60" fill="#42422A"/>
<rect x="912.85" y="621.60" width="1.60" height="1.60" fill="#42422A"/>
<rect x="916.00" y="621.60" width="1.60" height="1.60" fill="#42422A"/>
<rect x="919.15" y="621.60" width="1.60" height="1.60" fill="#42422A"/>
<rect x="922.30" y="621.60" width="1.60" height="1.60" fill="#42422A"/>
<rect x="925.45" y="621.60" width="1.60" height="1.60" fill="#42422A"/>
<rect x="928.60" y="621.60" width="1.60" height="1.60" fill="#42422A"/>
<rect x="931.75" y="621.60" width="1.60" height="1.60" fill="#42422A"/>
<rect x="934.90" y="621.60" width="1.60" height="1.60" fill="#42422A"/>
<rect x="938.05" y="621.60" width="1.60" height="1.60" fill="#42422A"/>
<rect x="940.80" y="621.20" width="2.40" height="2.40" fill="#D8D848"/>
<rect x="943.95" y="621.20" width="2.40" height="2.40" fill="#D8D848"/>
<rect x="947.10" y="621.20" width="2.40" height="2.40" fill="#D8D848"/>
<rect x="950.65" y="621.60" width="1.60" height="1.60" fill="#42422A"/>
<rect x="953.80" y="621.60" width="1.60" height="1.60" fill="#42422A"/>
<rect x="956.55" y="621.20" width="2.40" height="2.40" fill="#D8D848"/>
<rect x="960.10" y="621.60" width="1.60" height="1.60" fill="#42422A"/>
<rect x="963.25" y="621.60" width="1.60" height="1.60" fill="#42422A"/>
<rect x="966.40" y="621.60" width="1.60" height="1.60" fill="#42422A"/>
<rect x="969.55" y="621.60" width="1.60" height="1.60" fill="#42422A"/>
<rect x="972.30" y="621.20" width="2.40" height="2.40" fill="#D8D848"/>
<rect x="975.45" y="621.20" width="2.40" height="2.40" fill="#D8D848"/>
<rect x="978.60" y="621.20" width="2.40" height="2.40" fill="#D8D848"/>
<rect x="982.15" y="621.60" width="1.60" height="1.60" fill="#42422A"/>
<rect x="817" y="647.5" width="188.5" height="36" fill="#1E3C8C" />
<rect x="918.4" y="651.3" width="84" height="30.1" fill="#FFFFFF" />
<text x="823.8" y="677.1" font-size="28" font-weight="bold" fill="#FFFFFF" stroke="#FFFFFF" stroke-width="1.6" textLength="85" lengthAdjust="spacingAndGlyphs">TERM</text>
<rect x="912" y="667.3" width="6.4" height="5" fill="#FFFFFF" />
<rect x="918.4" y="667.3" width="6" height="5" fill="#1E3C8C" />
<text x="928" y="677.1" font-size="28" font-weight="bold" fill="#1E3C8C" stroke="#1E3C8C" stroke-width="1.6" textLength="64" lengthAdjust="spacingAndGlyphs">LAB</text>
<circle cx="997.9" cy="659" r="2.6" fill="#6080B0"/>
<rect x="3" y="697" width="1017" height="15" fill="#ECE9D8" />
<rect x="4.5" y="697.5" width="199" height="14" fill="none" stroke="#C8C4B0" stroke-width="1"/>
<text x="7.5" y="709" font-size="10.6" fill="#000" font-weight="normal" text-anchor="start" stroke="#000" stroke-width="0.22">SPL Mode</text>
<rect x="206.0" y="697.5" width="197.5" height="14" fill="none" stroke="#C8C4B0" stroke-width="1"/>
<text x="209.0" y="709" font-size="10.6" fill="#000" font-weight="normal" text-anchor="start" stroke="#000" stroke-width="0.22">Total Competitors: 0</text>
<rect x="406.0" y="697.5" width="196.5" height="14" fill="none" stroke="#C8C4B0" stroke-width="1"/>
<text x="409.0" y="709" font-size="10.6" fill="#000" font-weight="normal" text-anchor="start" stroke="#000" stroke-width="0.22">Leaderboard</text>
<rect x="605.0" y="697.5" width="196.5" height="14" fill="none" stroke="#C8C4B0" stroke-width="1"/>
<text x="608.0" y="709" font-size="10.6" fill="#000" font-weight="normal" text-anchor="start" stroke="#000" stroke-width="0.22">Rate: 0 FFT: 512 BW: 256 Hz</text>
<rect x="804.0" y="697.5" width="196.5" height="14" fill="none" stroke="#C8C4B0" stroke-width="1"/>
<text x="807.0" y="709" font-size="10.6" fill="#000" font-weight="normal" text-anchor="start" stroke="#000" stroke-width="0.22">Network:</text>
<rect x="3" y="712" width="1017" height="28" fill="url(#task)" />
<path d="M3 712 L130 712 Q143 712 143 726 Q143 740 130 740 L3 740 Z" fill="url(#start)"/>
<polygon points="16.5,718.5 24.5,719.5 24,725.5 16,724.8" fill="#F0602A"/>
<polygon points="25.3,720.8 32.5,722 32,728 24.8,726.8" fill="#84D028"/>
<polygon points="15.8,725.6 23.8,726.4 23.3,732.6 15.3,731.8" fill="#3A8CF0"/>
<polygon points="24.6,727.6 31.8,728.8 31.3,735 24.1,733.8" fill="#F8C818"/>
<text x="38.3" y="732.6" font-size="16" font-weight="bold" font-style="italic" fill="#F8FFF8" textLength="79" lengthAdjust="spacingAndGlyphs">Käynnistä</text>
<rect x="152.5" y="716.8" width="157" height="26" rx="3" fill="#3C7EEC"/>
<rect x="162.5" y="721.5" width="15" height="12" fill="#102810" stroke="#E0E8F0" stroke-width="1" rx="1.5"/>
<path d="M164.5 729.5 Q167.0 723.5 169.5 727.5 Q172.0 731.5 175.5 725.5" fill="none" stroke="#B0E040" stroke-width="1.2"/>
<rect x="310.5" y="716.7" width="158.5" height="26" rx="3" fill="#1E4EC4"/>
<rect x="322" y="721.5" width="15" height="12" fill="#102810" stroke="#E0E8F0" stroke-width="1" rx="1.5"/>
<path d="M324 729.5 Q326.5 723.5 329 727.5 Q331.5 731.5 335 725.5" fill="none" stroke="#B0E040" stroke-width="1.2"/>
<text x="342" y="731.3" font-size="10.8" fill="#FFFFFF" font-weight="normal" text-anchor="start" textLength="44" lengthAdjust="spacingAndGlyphs" stroke="#FFFFFF" stroke-width="0.22">Term-LAB</text>
<rect x="928" y="712" width="92" height="28" fill="url(#tray)" />
<line x1="928.5" y1="712" x2="928.5" y2="740" stroke="#0A6AB8" stroke-width="1" />
<rect x="939.5" y="720.5" width="14" height="11" fill="#E8F0F8" stroke="#203050" stroke-width="1"/>
<rect x="941.5" y="722.5" width="10" height="6" fill="#102080" />
<circle cx="946.5" cy="725.5" r="2.5" fill="#40D0C0"/>
<rect x="940" y="730" width="13" height="2" fill="#D0D8E0" />
<rect x="961" y="721" width="9" height="8" fill="#302050" stroke="#A0A0C0" stroke-width="0.8"/>
<rect x="957" y="725" width="9" height="8" fill="#403060" stroke="#C0C0D0" stroke-width="0.8"/>
<path d="M964 730 L971 737 M971 730 L964 737" stroke="#E02828" stroke-width="2"/>
<text x="979.5" y="731.2" font-size="10.8" fill="#FFFFFF" font-weight="normal" text-anchor="start" stroke="#FFFFFF" stroke-width="0.22">14:09</text>
</svg>
</body></html>
